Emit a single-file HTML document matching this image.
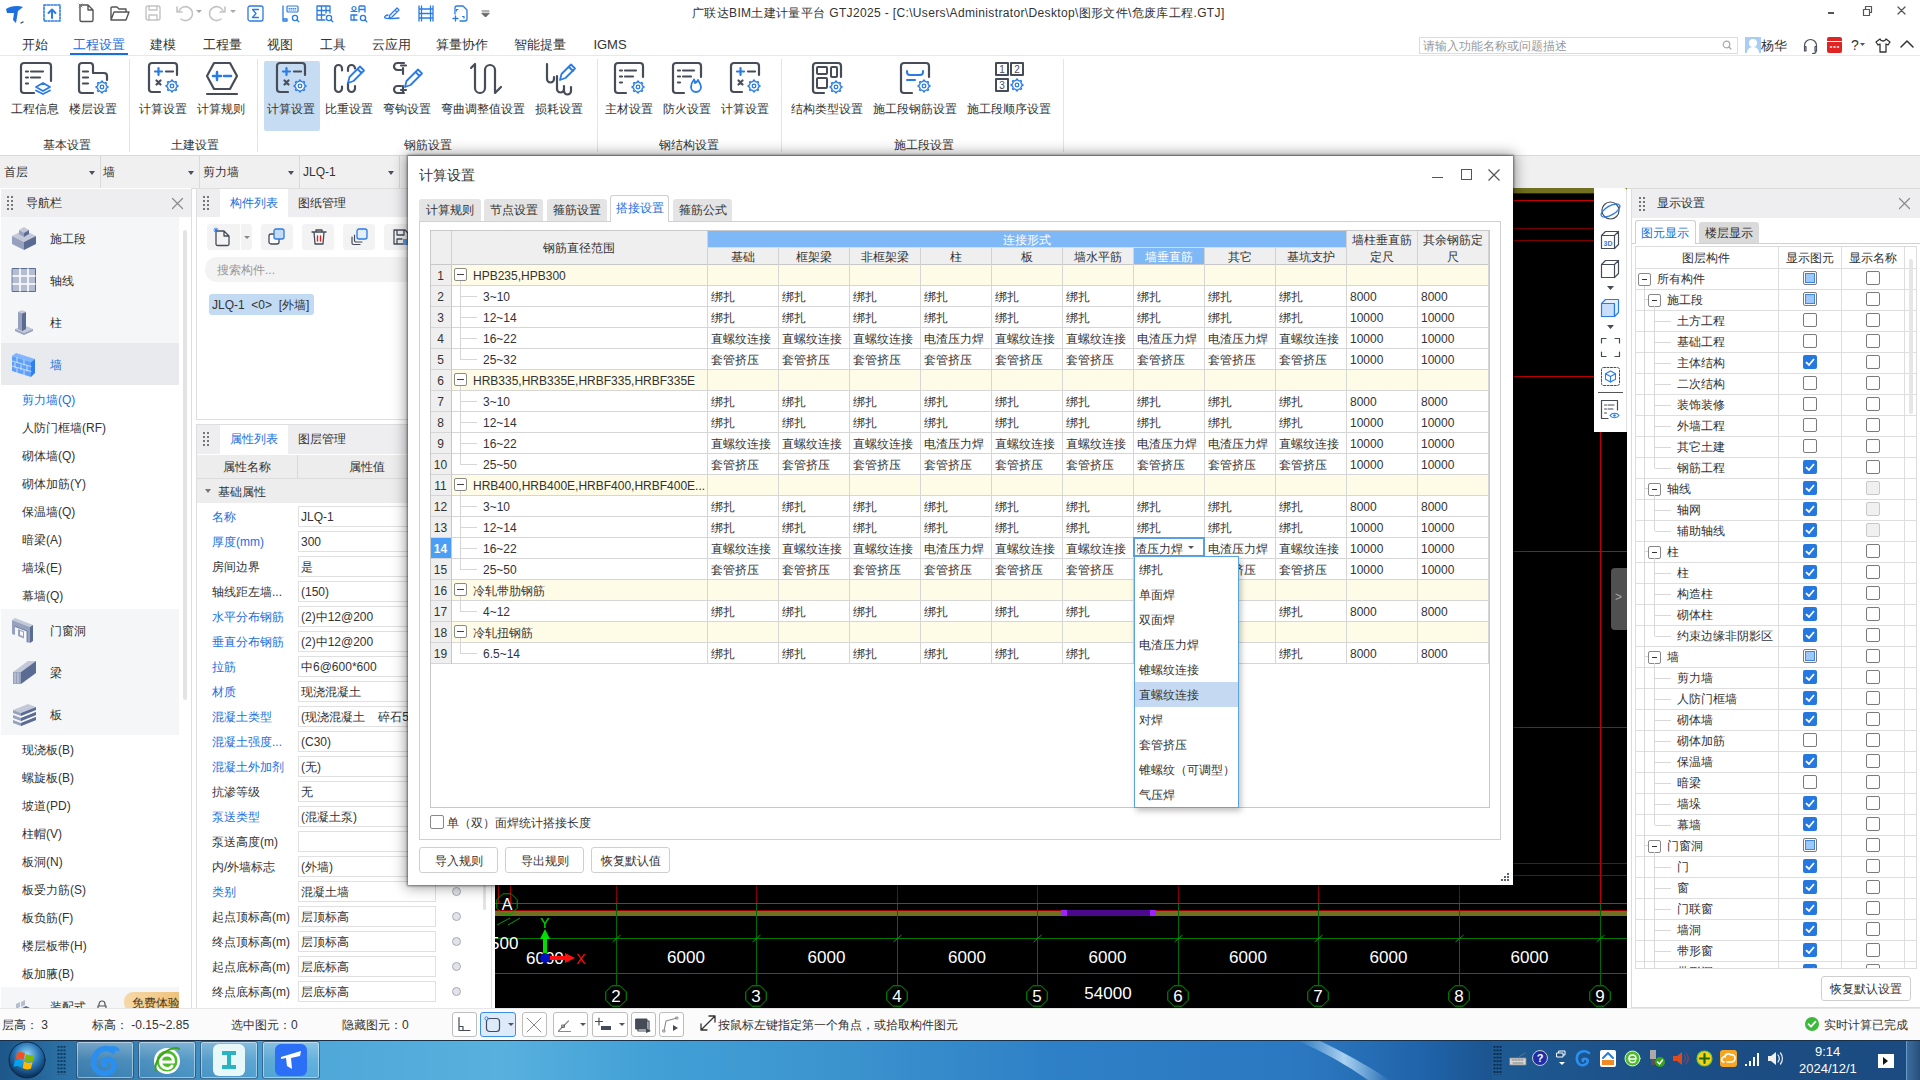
<!DOCTYPE html><html><head><meta charset="utf-8"><style>
*{box-sizing:border-box;margin:0;padding:0}
html,body{width:1920px;height:1080px;overflow:hidden;background:#fff;font-family:"Liberation Sans", sans-serif;color:#333;font-size:12px}
.a{position:absolute}
.t{position:absolute;white-space:nowrap;line-height:1;margin-top:1px}
svg{position:absolute;overflow:visible}
</style></head><body>

<div class="a" style="left:0;top:0;width:1920px;height:156px;background:#fff"></div>
<div class="t" style="left:692px;top:6px;font-size:12px;letter-spacing:0.35px;color:#333">广联达BIM土建计量平台 GTJ2025 - [C:\Users\Administrator\Desktop\图形文件\危废库工程.GTJ]</div>
<div class="t" style="left:-5px;width:80px;text-align:center;top:37px;font-size:13px;color:#333">开始</div>
<div class="t" style="left:59px;width:80px;text-align:center;top:37px;font-size:13px;color:#1a6fe0">工程设置</div>
<div class="t" style="left:123px;width:80px;text-align:center;top:37px;font-size:13px;color:#333">建模</div>
<div class="t" style="left:182px;width:80px;text-align:center;top:37px;font-size:13px;color:#333">工程量</div>
<div class="t" style="left:240px;width:80px;text-align:center;top:37px;font-size:13px;color:#333">视图</div>
<div class="t" style="left:293px;width:80px;text-align:center;top:37px;font-size:13px;color:#333">工具</div>
<div class="t" style="left:351px;width:80px;text-align:center;top:37px;font-size:13px;color:#333">云应用</div>
<div class="t" style="left:422px;width:80px;text-align:center;top:37px;font-size:13px;color:#333">算量协作</div>
<div class="t" style="left:500px;width:80px;text-align:center;top:37px;font-size:13px;color:#333">智能提量</div>
<div class="t" style="left:570px;width:80px;text-align:center;top:37px;font-size:13px;color:#333">IGMS</div>
<div class="a" style="left:70px;top:53px;width:58px;height:2px;background:#1a6fe0"></div>
<div class="a" style="left:0;top:55px;width:1920px;height:1px;background:#e8e8e8"></div>
<div class="a" style="left:264px;top:61px;width:56px;height:70px;background:#c6dcf3;border-radius:2px"></div>
<div class="t" style="left:-25px;width:120px;text-align:center;top:102px;font-size:12px;color:#333">工程信息</div>
<div class="t" style="left:33px;width:120px;text-align:center;top:102px;font-size:12px;color:#333">楼层设置</div>
<div class="t" style="left:103px;width:120px;text-align:center;top:102px;font-size:12px;color:#333">计算设置</div>
<div class="t" style="left:161px;width:120px;text-align:center;top:102px;font-size:12px;color:#333">计算规则</div>
<div class="t" style="left:231px;width:120px;text-align:center;top:102px;font-size:12px;color:#333">计算设置</div>
<div class="t" style="left:289px;width:120px;text-align:center;top:102px;font-size:12px;color:#333">比重设置</div>
<div class="t" style="left:347px;width:120px;text-align:center;top:102px;font-size:12px;color:#333">弯钩设置</div>
<div class="t" style="left:423px;width:120px;text-align:center;top:102px;font-size:12px;color:#333">弯曲调整值设置</div>
<div class="t" style="left:499px;width:120px;text-align:center;top:102px;font-size:12px;color:#333">损耗设置</div>
<div class="t" style="left:569px;width:120px;text-align:center;top:102px;font-size:12px;color:#333">主材设置</div>
<div class="t" style="left:627px;width:120px;text-align:center;top:102px;font-size:12px;color:#333">防火设置</div>
<div class="t" style="left:685px;width:120px;text-align:center;top:102px;font-size:12px;color:#333">计算设置</div>
<div class="t" style="left:767px;width:120px;text-align:center;top:102px;font-size:12px;color:#333">结构类型设置</div>
<div class="t" style="left:855px;width:120px;text-align:center;top:102px;font-size:12px;color:#333">施工段钢筋设置</div>
<div class="t" style="left:949px;width:120px;text-align:center;top:102px;font-size:12px;color:#333">施工段顺序设置</div>
<div class="t" style="left:7px;width:120px;text-align:center;top:138px;font-size:12px;color:#333">基本设置</div>
<div class="t" style="left:135px;width:120px;text-align:center;top:138px;font-size:12px;color:#333">土建设置</div>
<div class="t" style="left:368px;width:120px;text-align:center;top:138px;font-size:12px;color:#333">钢筋设置</div>
<div class="t" style="left:629px;width:120px;text-align:center;top:138px;font-size:12px;color:#333">钢结构设置</div>
<div class="t" style="left:864px;width:120px;text-align:center;top:138px;font-size:12px;color:#333">施工段设置</div>
<div class="a" style="left:129px;top:59px;width:1px;height:93px;background:#e4e4e4"></div>
<div class="a" style="left:257px;top:59px;width:1px;height:93px;background:#e4e4e4"></div>
<div class="a" style="left:597px;top:59px;width:1px;height:93px;background:#e4e4e4"></div>
<div class="a" style="left:781px;top:59px;width:1px;height:93px;background:#e4e4e4"></div>
<div class="a" style="left:1063px;top:59px;width:1px;height:93px;background:#e4e4e4"></div>
<div class="a" style="left:0;top:155px;width:1920px;height:1px;background:#d9d9d9"></div>
<svg width="33" height="33" viewBox="0 0 33 33" style="left:20px;top:62px" fill="none" stroke-linecap="round" stroke-linejoin="round" stroke-width="2.2"><path d="M14 31H4a3 3 0 0 1-3-3V4a3 3 0 0 1 3-3h24a3 3 0 0 1 3 3v15" stroke="#464c58"/><path d="M6 9.5h2M11 9.5h12M6 15.5h2M11 15.5h9M6 21.5h2" stroke="#464c58"/><path d="M16 25l7-4 7 4-7 4z" stroke="#2a7be4" stroke-width="1.8"/><path d="M16 28.5l7 3.5 7-3.5" stroke="#2a7be4" stroke-width="1.8"/></svg>
<svg width="33" height="33" viewBox="0 0 33 33" style="left:78px;top:62px" fill="none" stroke-linecap="round" stroke-linejoin="round" stroke-width="2.2"><path d="M15 31H4a3 3 0 0 1-3-3V4a3 3 0 0 1 3-3h8a3 3 0 0 1 3 3v7h11a3 3 0 0 1 3 3v4" stroke="#464c58"/><path d="M5 9.5h5M5 15.5h5M5 21.5h5" stroke="#464c58"/><polygon points="29.90,25.00 29.87,25.58 28.51,25.90 28.40,26.34 28.25,26.76 28.06,27.17 27.82,27.56 28.56,28.74 28.17,29.17 27.74,29.56 26.56,28.82 26.17,29.06 25.76,29.25 25.34,29.40 24.90,29.51 24.58,30.87 24.00,30.90 23.42,30.87 23.10,29.51 22.66,29.40 22.24,29.25 21.83,29.06 21.44,28.82 20.26,29.56 19.83,29.17 19.44,28.74 20.18,27.56 19.94,27.17 19.75,26.76 19.60,26.34 19.49,25.90 18.13,25.58 18.10,25.00 18.13,24.42 19.49,24.10 19.60,23.66 19.75,23.24 19.94,22.83 20.18,22.44 19.44,21.26 19.83,20.83 20.26,20.44 21.44,21.18 21.83,20.94 22.24,20.75 22.66,20.60 23.10,20.49 23.42,19.13 24.00,19.10 24.58,19.13 24.90,20.49 25.34,20.60 25.76,20.75 26.17,20.94 26.56,21.18 27.74,20.44 28.17,20.83 28.56,21.26 27.82,22.44 28.06,22.83 28.25,23.24 28.40,23.66 28.51,24.10 29.87,24.42" stroke="#2a7be4" stroke-width="1.3" fill="#fff"/><circle cx="24" cy="25" r="1.8" stroke="#2a7be4" stroke-width="1.3"/></svg>
<svg width="33" height="33" viewBox="0 0 33 33" style="left:148px;top:62px" fill="none" stroke-linecap="round" stroke-linejoin="round" stroke-width="2.2"><path d="M12 30H4a3 3 0 0 1-3-3V4a3 3 0 0 1 3-3h22a3 3 0 0 1 3 3v9" stroke="#464c58"/><path d="M7 9.5h7M10.5 6v7" stroke="#2a7be4"/><path d="M18 9.5h7" stroke="#464c58"/><path d="M8.5 18.5l4 4M12.5 18.5l-4 4" stroke="#464c58"/><polygon points="29.90,24.00 29.87,24.58 28.51,24.90 28.40,25.34 28.25,25.76 28.06,26.17 27.82,26.56 28.56,27.74 28.17,28.17 27.74,28.56 26.56,27.82 26.17,28.06 25.76,28.25 25.34,28.40 24.90,28.51 24.58,29.87 24.00,29.90 23.42,29.87 23.10,28.51 22.66,28.40 22.24,28.25 21.83,28.06 21.44,27.82 20.26,28.56 19.83,28.17 19.44,27.74 20.18,26.56 19.94,26.17 19.75,25.76 19.60,25.34 19.49,24.90 18.13,24.58 18.10,24.00 18.13,23.42 19.49,23.10 19.60,22.66 19.75,22.24 19.94,21.83 20.18,21.44 19.44,20.26 19.83,19.83 20.26,19.44 21.44,20.18 21.83,19.94 22.24,19.75 22.66,19.60 23.10,19.49 23.42,18.13 24.00,18.10 24.58,18.13 24.90,19.49 25.34,19.60 25.76,19.75 26.17,19.94 26.56,20.18 27.74,19.44 28.17,19.83 28.56,20.26 27.82,21.44 28.06,21.83 28.25,22.24 28.40,22.66 28.51,23.10 29.87,23.42" stroke="#2a7be4" stroke-width="1.3" fill="#fff"/><circle cx="24" cy="24" r="1.8" stroke="#2a7be4" stroke-width="1.3"/></svg>
<svg width="33" height="33" viewBox="0 0 33 33" style="left:206px;top:62px" fill="none" stroke-linecap="round" stroke-linejoin="round" stroke-width="2.2"><path d="M8 1h16l7 13-7 13H8L1 14z" stroke="#464c58"/><path d="M7 14h8M11 10v8M18 14h7" stroke="#2a7be4" stroke-width="2.5"/><path d="M1 32h30" stroke="#464c58"/></svg>
<svg width="33" height="33" viewBox="0 0 33 33" style="left:276px;top:62px" fill="none" stroke-linecap="round" stroke-linejoin="round" stroke-width="2.2"><path d="M12 30H4a3 3 0 0 1-3-3V4a3 3 0 0 1 3-3h22a3 3 0 0 1 3 3v9" stroke="#464c58"/><path d="M7 9.5h7M10.5 6v7" stroke="#2a7be4"/><path d="M18 9.5h7" stroke="#464c58"/><path d="M8.5 18.5l4 4M12.5 18.5l-4 4" stroke="#464c58"/><polygon points="29.90,24.00 29.87,24.58 28.51,24.90 28.40,25.34 28.25,25.76 28.06,26.17 27.82,26.56 28.56,27.74 28.17,28.17 27.74,28.56 26.56,27.82 26.17,28.06 25.76,28.25 25.34,28.40 24.90,28.51 24.58,29.87 24.00,29.90 23.42,29.87 23.10,28.51 22.66,28.40 22.24,28.25 21.83,28.06 21.44,27.82 20.26,28.56 19.83,28.17 19.44,27.74 20.18,26.56 19.94,26.17 19.75,25.76 19.60,25.34 19.49,24.90 18.13,24.58 18.10,24.00 18.13,23.42 19.49,23.10 19.60,22.66 19.75,22.24 19.94,21.83 20.18,21.44 19.44,20.26 19.83,19.83 20.26,19.44 21.44,20.18 21.83,19.94 22.24,19.75 22.66,19.60 23.10,19.49 23.42,18.13 24.00,18.10 24.58,18.13 24.90,19.49 25.34,19.60 25.76,19.75 26.17,19.94 26.56,20.18 27.74,19.44 28.17,19.83 28.56,20.26 27.82,21.44 28.06,21.83 28.25,22.24 28.40,22.66 28.51,23.10 29.87,23.42" stroke="#2a7be4" stroke-width="1.3" fill="#fff"/><circle cx="24" cy="24" r="1.8" stroke="#2a7be4" stroke-width="1.3"/></svg>
<svg width="33" height="33" viewBox="0 0 33 33" style="left:334px;top:62px" fill="none" stroke-linecap="round" stroke-linejoin="round" stroke-width="2.2"><path d="M8 8.5V6.5a3.5 3.5 0 0 0-7 0v20a3.5 3.5 0 0 0 7 0v-2" stroke="#464c58"/><path d="M14 9V6.5a3.5 3.5 0 0 1 7 0M14 21v5.5a3.5 3.5 0 0 0 7 0V24" stroke="#464c58"/><path d="M14 21l1.5-6L26 4.5l4 4L19.5 19z M23.5 7l4 4" stroke="#2a7be4" stroke-width="1.8" fill="#fff"/></svg>
<svg width="33" height="33" viewBox="0 0 33 33" style="left:392px;top:62px" fill="none" stroke-linecap="round" stroke-linejoin="round" stroke-width="2.2"><path d="M12 1H5.5a3.5 3.5 0 0 0 0 7H9M11 6v6M9 3.5h5" stroke="#464c58"/><path d="M12 31H5.5a3.5 3.5 0 0 1 0-7H9M11 24v7M9 28h5" stroke="#464c58"/><path d="M13 25l1.5-6L26 7.5l4 4L18.5 23z M23.5 10l4 4" stroke="#2a7be4" stroke-width="1.8"/></svg>
<svg width="33" height="33" viewBox="0 0 33 33" style="left:468px;top:62px" fill="none" stroke-linecap="round" stroke-linejoin="round" stroke-width="2.2"><path d="M3 6l4-4v24a5 5 0 0 0 10 0V8a5 5 0 0 1 10 0v23l6-6" stroke="#464c58"/></svg>
<svg width="33" height="33" viewBox="0 0 33 33" style="left:544px;top:62px" fill="none" stroke-linecap="round" stroke-linejoin="round" stroke-width="2.2"><path d="M3 2v15a3.5 3.5 0 0 0 7 0v-2M13 14v13a3.5 3.5 0 0 0 7 0v-3M20 24v5a3.5 3.5 0 0 0 7 0v-4" stroke="#464c58"/><path d="M16 18l1.5-6L27 2.5l4 4L21.5 16z M25 5l4 4" stroke="#2a7be4" stroke-width="1.8"/></svg>
<svg width="33" height="33" viewBox="0 0 33 33" style="left:614px;top:62px" fill="none" stroke-linecap="round" stroke-linejoin="round" stroke-width="2.2"><path d="M12 31H4a3 3 0 0 1-3-3V4a3 3 0 0 1 3-3h22a3 3 0 0 1 3 3v11" stroke="#464c58"/><path d="M6 8.5h2M11 8.5h11M6 14.5h2M11 14.5h8M6 20.5h2" stroke="#464c58"/><polygon points="29.90,25.00 29.87,25.58 28.51,25.90 28.40,26.34 28.25,26.76 28.06,27.17 27.82,27.56 28.56,28.74 28.17,29.17 27.74,29.56 26.56,28.82 26.17,29.06 25.76,29.25 25.34,29.40 24.90,29.51 24.58,30.87 24.00,30.90 23.42,30.87 23.10,29.51 22.66,29.40 22.24,29.25 21.83,29.06 21.44,28.82 20.26,29.56 19.83,29.17 19.44,28.74 20.18,27.56 19.94,27.17 19.75,26.76 19.60,26.34 19.49,25.90 18.13,25.58 18.10,25.00 18.13,24.42 19.49,24.10 19.60,23.66 19.75,23.24 19.94,22.83 20.18,22.44 19.44,21.26 19.83,20.83 20.26,20.44 21.44,21.18 21.83,20.94 22.24,20.75 22.66,20.60 23.10,20.49 23.42,19.13 24.00,19.10 24.58,19.13 24.90,20.49 25.34,20.60 25.76,20.75 26.17,20.94 26.56,21.18 27.74,20.44 28.17,20.83 28.56,21.26 27.82,22.44 28.06,22.83 28.25,23.24 28.40,23.66 28.51,24.10 29.87,24.42" stroke="#2a7be4" stroke-width="1.3" fill="#fff"/><circle cx="24" cy="25" r="1.8" stroke="#2a7be4" stroke-width="1.3"/></svg>
<svg width="33" height="33" viewBox="0 0 33 33" style="left:672px;top:62px" fill="none" stroke-linecap="round" stroke-linejoin="round" stroke-width="2.2"><path d="M12 31H4a3 3 0 0 1-3-3V4a3 3 0 0 1 3-3h22a3 3 0 0 1 3 3v11" stroke="#464c58"/><path d="M6 8.5h2M11 8.5h11M6 14.5h2M11 14.5h8M6 20.5h2" stroke="#464c58"/><path d="M19 25a5 5 0 0 0 10 0c0-3-2-5-3-7-1 2-1.5 3-3 3 0-1.5 0-2.5-1-3.5-1.5 2-3 4-3 7.5z" stroke="#2a7be4" stroke-width="1.8" fill="#fff"/></svg>
<svg width="33" height="33" viewBox="0 0 33 33" style="left:730px;top:62px" fill="none" stroke-linecap="round" stroke-linejoin="round" stroke-width="2.2"><path d="M12 30H4a3 3 0 0 1-3-3V4a3 3 0 0 1 3-3h22a3 3 0 0 1 3 3v9" stroke="#464c58"/><path d="M7 9.5h7M10.5 6v7" stroke="#2a7be4"/><path d="M18 9.5h7" stroke="#464c58"/><path d="M8.5 18.5l4 4M12.5 18.5l-4 4" stroke="#464c58"/><polygon points="29.90,24.00 29.87,24.58 28.51,24.90 28.40,25.34 28.25,25.76 28.06,26.17 27.82,26.56 28.56,27.74 28.17,28.17 27.74,28.56 26.56,27.82 26.17,28.06 25.76,28.25 25.34,28.40 24.90,28.51 24.58,29.87 24.00,29.90 23.42,29.87 23.10,28.51 22.66,28.40 22.24,28.25 21.83,28.06 21.44,27.82 20.26,28.56 19.83,28.17 19.44,27.74 20.18,26.56 19.94,26.17 19.75,25.76 19.60,25.34 19.49,24.90 18.13,24.58 18.10,24.00 18.13,23.42 19.49,23.10 19.60,22.66 19.75,22.24 19.94,21.83 20.18,21.44 19.44,20.26 19.83,19.83 20.26,19.44 21.44,20.18 21.83,19.94 22.24,19.75 22.66,19.60 23.10,19.49 23.42,18.13 24.00,18.10 24.58,18.13 24.90,19.49 25.34,19.60 25.76,19.75 26.17,19.94 26.56,20.18 27.74,19.44 28.17,19.83 28.56,20.26 27.82,21.44 28.06,21.83 28.25,22.24 28.40,22.66 28.51,23.10 29.87,23.42" stroke="#2a7be4" stroke-width="1.3" fill="#fff"/><circle cx="24" cy="24" r="1.8" stroke="#2a7be4" stroke-width="1.3"/></svg>
<svg width="33" height="33" viewBox="0 0 33 33" style="left:812px;top:62px" fill="none" stroke-linecap="round" stroke-linejoin="round" stroke-width="2.2"><path d="M12 31H4a3 3 0 0 1-3-3V4a3 3 0 0 1 3-3h22a3 3 0 0 1 3 3v11" stroke="#464c58"/><rect x="5" y="5" width="10" height="7" rx="1" stroke="#464c58" stroke-width="2"/><rect x="19" y="5" width="6" height="10" rx="1" stroke="#464c58" stroke-width="2"/><rect x="5" y="16" width="10" height="10" rx="1" stroke="#464c58" stroke-width="2"/><polygon points="29.90,25.00 29.87,25.58 28.51,25.90 28.40,26.34 28.25,26.76 28.06,27.17 27.82,27.56 28.56,28.74 28.17,29.17 27.74,29.56 26.56,28.82 26.17,29.06 25.76,29.25 25.34,29.40 24.90,29.51 24.58,30.87 24.00,30.90 23.42,30.87 23.10,29.51 22.66,29.40 22.24,29.25 21.83,29.06 21.44,28.82 20.26,29.56 19.83,29.17 19.44,28.74 20.18,27.56 19.94,27.17 19.75,26.76 19.60,26.34 19.49,25.90 18.13,25.58 18.10,25.00 18.13,24.42 19.49,24.10 19.60,23.66 19.75,23.24 19.94,22.83 20.18,22.44 19.44,21.26 19.83,20.83 20.26,20.44 21.44,21.18 21.83,20.94 22.24,20.75 22.66,20.60 23.10,20.49 23.42,19.13 24.00,19.10 24.58,19.13 24.90,20.49 25.34,20.60 25.76,20.75 26.17,20.94 26.56,21.18 27.74,20.44 28.17,20.83 28.56,21.26 27.82,22.44 28.06,22.83 28.25,23.24 28.40,23.66 28.51,24.10 29.87,24.42" stroke="#2a7be4" stroke-width="1.3" fill="#fff"/><circle cx="24" cy="25" r="1.8" stroke="#2a7be4" stroke-width="1.3"/></svg>
<svg width="33" height="33" viewBox="0 0 33 33" style="left:900px;top:62px" fill="none" stroke-linecap="round" stroke-linejoin="round" stroke-width="2.2"><path d="M12 31H4a3 3 0 0 1-3-3V4a3 3 0 0 1 3-3h22a3 3 0 0 1 3 3v11" stroke="#464c58"/><path d="M7 9v1a3 3 0 0 0 3 3h10a3 3 0 0 0 3-3V9M7 18h8" stroke="#2a7be4" stroke-width="2"/><polygon points="29.90,24.00 29.87,24.58 28.51,24.90 28.40,25.34 28.25,25.76 28.06,26.17 27.82,26.56 28.56,27.74 28.17,28.17 27.74,28.56 26.56,27.82 26.17,28.06 25.76,28.25 25.34,28.40 24.90,28.51 24.58,29.87 24.00,29.90 23.42,29.87 23.10,28.51 22.66,28.40 22.24,28.25 21.83,28.06 21.44,27.82 20.26,28.56 19.83,28.17 19.44,27.74 20.18,26.56 19.94,26.17 19.75,25.76 19.60,25.34 19.49,24.90 18.13,24.58 18.10,24.00 18.13,23.42 19.49,23.10 19.60,22.66 19.75,22.24 19.94,21.83 20.18,21.44 19.44,20.26 19.83,19.83 20.26,19.44 21.44,20.18 21.83,19.94 22.24,19.75 22.66,19.60 23.10,19.49 23.42,18.13 24.00,18.10 24.58,18.13 24.90,19.49 25.34,19.60 25.76,19.75 26.17,19.94 26.56,20.18 27.74,19.44 28.17,19.83 28.56,20.26 27.82,21.44 28.06,21.83 28.25,22.24 28.40,22.66 28.51,23.10 29.87,23.42" stroke="#2a7be4" stroke-width="1.3" fill="#fff"/><circle cx="24" cy="24" r="1.8" stroke="#2a7be4" stroke-width="1.3"/></svg>
<svg width="33" height="33" viewBox="0 0 33 33" style="left:994px;top:62px" fill="none" stroke-linecap="round" stroke-linejoin="round" stroke-width="2.2"><rect x="2" y="1" width="12" height="12" stroke="#464c58" stroke-width="2"/><rect x="17" y="1" width="12" height="12" stroke="#464c58" stroke-width="2"/><rect x="2" y="17" width="12" height="12" stroke="#464c58" stroke-width="2"/><text x="8" y="11" font-size="10" fill="#464c58" stroke="none" text-anchor="middle" font-family="Liberation Sans">1</text><text x="23" y="11" font-size="10" fill="#464c58" stroke="none" text-anchor="middle" font-family="Liberation Sans">2</text><text x="8" y="27" font-size="10" fill="#464c58" stroke="none" text-anchor="middle" font-family="Liberation Sans">3</text><polygon points="28.90,23.00 28.87,23.58 27.51,23.90 27.40,24.34 27.25,24.76 27.06,25.17 26.82,25.56 27.56,26.74 27.17,27.17 26.74,27.56 25.56,26.82 25.17,27.06 24.76,27.25 24.34,27.40 23.90,27.51 23.58,28.87 23.00,28.90 22.42,28.87 22.10,27.51 21.66,27.40 21.24,27.25 20.83,27.06 20.44,26.82 19.26,27.56 18.83,27.17 18.44,26.74 19.18,25.56 18.94,25.17 18.75,24.76 18.60,24.34 18.49,23.90 17.13,23.58 17.10,23.00 17.13,22.42 18.49,22.10 18.60,21.66 18.75,21.24 18.94,20.83 19.18,20.44 18.44,19.26 18.83,18.83 19.26,18.44 20.44,19.18 20.83,18.94 21.24,18.75 21.66,18.60 22.10,18.49 22.42,17.13 23.00,17.10 23.58,17.13 23.90,18.49 24.34,18.60 24.76,18.75 25.17,18.94 25.56,19.18 26.74,18.44 27.17,18.83 27.56,19.26 26.82,20.44 27.06,20.83 27.25,21.24 27.40,21.66 27.51,22.10 28.87,22.42" stroke="#2a7be4" stroke-width="1.3" fill="#fff"/><circle cx="23" cy="23" r="1.8" stroke="#2a7be4" stroke-width="1.3"/></svg>
<svg width="22" height="22" viewBox="0 0 22 22" style="left:4px;top:3px" fill="none" stroke-linecap="round" stroke-linejoin="round" stroke-width="2.2"><path d="M2 6c4-3 12-4 17-2l-5 4-2 12-3-3 1-7H3z" fill="#1f6fe0" stroke="none"/><path d="M17 20l2-1" stroke="#333" stroke-width="1.2"/></svg><svg width="20" height="20" viewBox="0 0 20 20" style="left:42px;top:3px" fill="none" stroke-linecap="round" stroke-linejoin="round" stroke-width="2.2"><rect x="2" y="2" width="16" height="16" stroke="#2a7be4" stroke-width="1.6" stroke-dasharray="2 1.5"/><path d="M10 15V7M6.5 10l3.5-3.5 3.5 3.5" stroke="#2a7be4" stroke-width="2"/></svg><svg width="20" height="20" viewBox="0 0 20 20" style="left:76px;top:3px" fill="none" stroke-linecap="round" stroke-linejoin="round" stroke-width="2.2"><path d="M4 2h8l5 5v10a1.5 1.5 0 0 1-1.5 1.5h-10A1.5 1.5 0 0 1 4 17z M12 2v5h5" stroke="#555" stroke-width="1.4"/><path d="M3 1l3 3M6 1l-3 3" stroke="#2a7be4" stroke-width="1"/></svg><svg width="22" height="20" viewBox="0 0 22 20" style="left:109px;top:3px" fill="none" stroke-linecap="round" stroke-linejoin="round" stroke-width="2.2"><path d="M2 17V5a1 1 0 0 1 1-1h5l2 2h7v3M2 17l3-8h15l-3 8z" stroke="#555" stroke-width="1.4"/></svg><svg width="20" height="20" viewBox="0 0 20 20" style="left:143px;top:3px" fill="none" stroke-linecap="round" stroke-linejoin="round" stroke-width="2.2"><rect x="3" y="3" width="14" height="14" rx="2" stroke="#c4c4c4" stroke-width="1.4"/><path d="M6 3v4h8V3M6 17v-5h8v5" stroke="#c4c4c4" stroke-width="1.4"/></svg><svg width="20" height="20" viewBox="0 0 20 20" style="left:174px;top:3px" fill="none" stroke-linecap="round" stroke-linejoin="round" stroke-width="2.2"><path d="M5 8a7 7 0 1 1 2 8" stroke="#c4c4c4" stroke-width="1.6"/><path d="M3 4v5h5" stroke="#c4c4c4" stroke-width="1.6"/></svg><svg width="6" height="4" viewBox="0 0 6 4" style="left:196px;top:10px" fill="none" stroke-linecap="round" stroke-linejoin="round" stroke-width="2.2"><path d="M0 0h6L3 3z" fill="#aaa" stroke="none"/></svg><svg width="20" height="20" viewBox="0 0 20 20" style="left:208px;top:3px" fill="none" stroke-linecap="round" stroke-linejoin="round" stroke-width="2.2"><path d="M15 8a7 7 0 1 0-2 8" stroke="#c4c4c4" stroke-width="1.6"/><path d="M17 4v5h-5" stroke="#c4c4c4" stroke-width="1.6"/></svg><svg width="6" height="4" viewBox="0 0 6 4" style="left:230px;top:10px" fill="none" stroke-linecap="round" stroke-linejoin="round" stroke-width="2.2"><path d="M0 0h6L3 3z" fill="#aaa" stroke="none"/></svg><svg width="17" height="17" viewBox="0 0 17 17" style="left:247px;top:5px" fill="none" stroke-linecap="round" stroke-linejoin="round" stroke-width="2.2"><rect x="1" y="1" width="15" height="15" rx="2" stroke="#2a7be4" stroke-width="1.3"/><path d="M11.5 4.5H5.5l3.5 4-3.5 4h6" stroke="#2a7be4" stroke-width="1.3"/></svg><svg width="18" height="18" viewBox="0 0 18 18" style="left:281px;top:4px" fill="none" stroke-linecap="round" stroke-linejoin="round" stroke-width="2.2"><path d="M2 2v15h4v-2H2" stroke="#2a7be4" stroke-width="1.3"/><rect x="6" y="2" width="11" height="6" rx="1" stroke="#2a7be4" stroke-width="1.2"/><path d="M8 4.5h.8M10 4.5h.8M12 4.5h.8M14 4.5h.8M8 6h.8M10 6h.8M12 6h.8M14 6h.8" stroke="#2a7be4" stroke-width=".9"/><circle cx="14" cy="14" r="2.6" stroke="#2a7be4" stroke-width="1.3"/><path d="M16 16l1.8 1.8" stroke="#2a7be4" stroke-width="1.3"/></svg><svg width="18" height="18" viewBox="0 0 18 18" style="left:315px;top:4px" fill="none" stroke-linecap="round" stroke-linejoin="round" stroke-width="2.2"><path d="M2 2h13v7M2 2v14h8M2 6.5h13M2 11h8M6.5 2v14M11 2v7" stroke="#2a7be4" stroke-width="1.3"/><circle cx="14" cy="14" r="2.6" stroke="#2a7be4" stroke-width="1.3"/><path d="M16 16l1.8 1.8" stroke="#2a7be4" stroke-width="1.3"/></svg><svg width="18" height="18" viewBox="0 0 18 18" style="left:349px;top:4px" fill="none" stroke-linecap="round" stroke-linejoin="round" stroke-width="2.2"><circle cx="5" cy="4.5" r="2" stroke="#2a7be4" stroke-width="1.2"/><path d="M2 7.5h6" stroke="#2a7be4" stroke-width="1.2"/><path d="M10 8V3a1 1 0 0 1 1-1h4a1 1 0 0 1 1 1v5M10 5.5h6" stroke="#2a7be4" stroke-width="1.3"/><path d="M8 11H2v5h6" stroke="#2a7be4" stroke-width="1.3"/><path d="M5 11v5" stroke="#2a7be4" stroke-width="1.3"/><circle cx="14" cy="14" r="2.6" stroke="#2a7be4" stroke-width="1.3"/><path d="M16 16l1.8 1.8" stroke="#2a7be4" stroke-width="1.3"/></svg><svg width="18" height="16" viewBox="0 0 18 16" style="left:383px;top:5px" fill="none" stroke-linecap="round" stroke-linejoin="round" stroke-width="2.2"><path d="M6 13l1-3 7-7 2 2-7 7z M12 5l2 2" stroke="#2a7be4" stroke-width="1.3"/><path d="M5 10c-3 .5-4 2-3 3s9 .5 14 0" stroke="#2a7be4" stroke-width="1.3"/></svg><svg width="18" height="17" viewBox="0 0 18 17" style="left:417px;top:5px" fill="none" stroke-linecap="round" stroke-linejoin="round" stroke-width="2.2"><path d="M2 1v15M16 1v15M2 4h14M2 8.5h14M2 13h14M4.5 1v15M13.5 1v15" stroke="#2a7be4" stroke-width="1.3"/></svg><svg width="18" height="17" viewBox="0 0 18 17" style="left:451px;top:5px" fill="none" stroke-linecap="round" stroke-linejoin="round" stroke-width="2.2"><path d="M4 9V3a2 2 0 0 1 2-2h6l4 4v9a2 2 0 0 1-2 2H9" stroke="#2a7be4" stroke-width="1.3"/><path d="M7 4.5H5.5v1.5M13 13v-1.5h-1.5" stroke="#2a7be4" stroke-width="1.2"/><path d="M4.5 11v5M2 13.5h5" stroke="#2a7be4" stroke-width="1.3"/></svg><svg width="9" height="8" viewBox="0 0 9 8" style="left:481px;top:10px" fill="none" stroke-linecap="round" stroke-linejoin="round" stroke-width="2.2"><path d="M1 1h7M1 3.5l3.5 3.5 3.5-3.5z" stroke="#666" fill="#666" stroke-width="1"/></svg>
<div class="a" style="left:1828px;top:12px;width:6px;height:2px;background:#555"></div>
<svg width="11" height="11" viewBox="0 0 11 11" style="left:1862px;top:5px" fill="none" stroke-linecap="round" stroke-linejoin="round" stroke-width="2.2"><path d="M1.5 4.5h6v6h-6z M3.5 4.5V1.5h6v6h-2" stroke="#555" stroke-width="1.2"/></svg>
<svg width="9" height="9" viewBox="0 0 9 9" style="left:1897px;top:6px" fill="none" stroke-linecap="round" stroke-linejoin="round" stroke-width="2.2"><path d="M1 1l7 7M8 1L1 8" stroke="#555" stroke-width="1.3"/></svg>
<div class="a" style="left:1745px;top:37px;width:16px;height:16px;background:#a9cdf3"></div>
<svg width="16" height="16" viewBox="0 0 16 16" style="left:1745px;top:37px" fill="none" stroke-linecap="round" stroke-linejoin="round" stroke-width="2.2"><circle cx="8" cy="6" r="4" fill="#fff" stroke="none"/><path d="M2 16c0-4 3-6 6-6s6 2 6 6z" fill="#fff" stroke="none"/></svg>
<svg width="17" height="17" viewBox="0 0 17 17" style="left:1802px;top:37px" fill="none" stroke-linecap="round" stroke-linejoin="round" stroke-width="2.2"><path d="M2.5 10V8.5a6 6 0 0 1 12 0V10M2.5 9.5h1.5v4.5H2.5zM13 9.5h1.5v4.5H13zM14 14.5c0 1.2-1.5 2-3.5 2" stroke="#4a5060" stroke-width="1.2"/></svg>
<div class="a" style="left:1827px;top:37px;width:15px;height:16px;background:#e02424;border-radius:2px"></div>
<div class="a" style="left:1827px;top:41px;width:15px;height:1px;background:#fff"></div>
<svg width="11" height="4" viewBox="0 0 11 4" style="left:1829px;top:45px" fill="none" stroke-linecap="round" stroke-linejoin="round" stroke-width="2.2"><path d="M1.5 2h1M5 2h1M8.5 2h1" stroke="#fff" stroke-width="1.6"/></svg>
<div class="t" style="left:1851px;top:37px;font-size:14px;color:#333">?</div>
<svg width="5" height="4" viewBox="0 0 5 4" style="left:1860px;top:43px" fill="none" stroke-linecap="round" stroke-linejoin="round" stroke-width="2.2"><path d="M0 0h5L2.5 3z" fill="#555" stroke="none"/></svg>
<svg width="18" height="16" viewBox="0 0 18 16" style="left:1874px;top:37px" fill="none" stroke-linecap="round" stroke-linejoin="round" stroke-width="2.2"><path d="M6 2L2 5l2 3 2-1v8h6V7l2 1 2-3-4-3c-.5 1.5-1.5 2-3 2s-2.5-.5-3-2z" stroke="#333" stroke-width="1.3"/></svg>
<svg width="16" height="12" viewBox="0 0 16 12" style="left:1899px;top:38px" fill="none" stroke-linecap="round" stroke-linejoin="round" stroke-width="2.2"><path d="M2 9l6-6 6 6" stroke="#333" stroke-width="1.5"/></svg>
<div class="a" style="left:1419px;top:37px;width:319px;height:17px;border:1px solid #dcdcdc;background:#fff"></div>
<div class="t" style="left:1423px;top:39px;font-size:12px;color:#999">请输入功能名称或问题描述</div>
<div class="t" style="left:1761px;top:38px;font-size:13px;color:#333">杨华</div>
<svg width="10" height="10" viewBox="0 0 10 10" style="left:1722px;top:40px" fill="none" stroke-linecap="round" stroke-linejoin="round" stroke-width="2.2"><circle cx="4.5" cy="4.5" r="3.3" stroke="#aaa" stroke-width="1.2"/><path d="M7 7l2 2" stroke="#aaa" stroke-width="1.2"/></svg>
<div class="a" style="left:0;top:156px;width:1920px;height:33px;background:#f0f0f0;border-bottom:1px solid #dadada"></div>
<div class="a" style="left:0px;top:156px;width:101px;height:32px;border-right:1px solid #dadada"></div>
<div class="t" style="left:4px;top:165px;font-size:12px;color:#333">首层</div>
<div class="a" style="left:89px;top:171px;width:0;height:0;border-left:3px solid transparent;border-right:3px solid transparent;border-top:4px solid #4a5060"></div>
<div class="a" style="left:99px;top:156px;width:101px;height:32px;border-right:1px solid #dadada"></div>
<div class="t" style="left:103px;top:165px;font-size:12px;color:#333">墙</div>
<div class="a" style="left:188px;top:171px;width:0;height:0;border-left:3px solid transparent;border-right:3px solid transparent;border-top:4px solid #4a5060"></div>
<div class="a" style="left:199px;top:156px;width:101px;height:32px;border-right:1px solid #dadada"></div>
<div class="t" style="left:203px;top:165px;font-size:12px;color:#333">剪力墙</div>
<div class="a" style="left:288px;top:171px;width:0;height:0;border-left:3px solid transparent;border-right:3px solid transparent;border-top:4px solid #4a5060"></div>
<div class="a" style="left:299px;top:156px;width:101px;height:32px;border-right:1px solid #dadada"></div>
<div class="t" style="left:303px;top:165px;font-size:12px;color:#333">JLQ-1</div>
<div class="a" style="left:388px;top:171px;width:0;height:0;border-left:3px solid transparent;border-right:3px solid transparent;border-top:4px solid #4a5060"></div>
<div class="a" style="left:0;top:188px;width:192px;height:822px;background:#fff;border-right:1px solid #dedede"></div>
<div class="a" style="left:1px;top:189px;width:190px;height:28px;background:#eeeef0"></div>
<div class="t" style="left:26px;top:196px;font-size:12px;color:#333">导航栏</div>
<svg width="11" height="11" viewBox="0 0 11 11" style="left:172px;top:198px" fill="none" stroke-linecap="round" stroke-linejoin="round" stroke-width="2.2"><path d="M.5 .5l10 10M10.5 .5l-10 10" stroke="#8a8a8a" stroke-width="1.2"/></svg>
<div class="a" style="left:7px;top:196px;width:2px;height:2px;background:#777"></div><div class="a" style="left:11px;top:196px;width:2px;height:2px;background:#777"></div><div class="a" style="left:7px;top:200px;width:2px;height:2px;background:#777"></div><div class="a" style="left:11px;top:200px;width:2px;height:2px;background:#777"></div><div class="a" style="left:7px;top:204px;width:2px;height:2px;background:#777"></div><div class="a" style="left:11px;top:204px;width:2px;height:2px;background:#777"></div><div class="a" style="left:7px;top:208px;width:2px;height:2px;background:#777"></div><div class="a" style="left:11px;top:208px;width:2px;height:2px;background:#777"></div>
<div class="a" style="left:1px;top:217px;width:178px;height:168px;background:#f5f6f8"></div>
<div class="a" style="left:1px;top:343px;width:178px;height:42px;background:#e9eaee"></div>
<div class="t" style="left:50px;top:232px;font-size:12px;color:#333">施工段</div>
<div class="t" style="left:50px;top:274px;font-size:12px;color:#333">轴线</div>
<div class="t" style="left:50px;top:316px;font-size:12px;color:#333">柱</div>
<div class="t" style="left:50px;top:358px;font-size:12px;color:#1a6fe0">墙</div>
<svg width="26" height="26" viewBox="0 0 26 26" style="left:11px;top:225px" fill="none" stroke-linecap="round" stroke-linejoin="round" stroke-width="2.2"><path d="M1 11l12-6 12 6-12 6z" fill="#c3c9d9" stroke="none"/><path d="M1 11v8l12 6v-8z" fill="#96a1bd" stroke="none"/><path d="M25 11v8l-12 6v-8z" fill="#5b6c93" stroke="none"/><path d="M8 5l5-3 5 3-5 3z" fill="#c3c9d9" stroke="none"/><path d="M8 5v4l5 3V8z" fill="#96a1bd" stroke="none"/><path d="M18 5v4l-5 3V8z" fill="#5b6c93" stroke="none"/></svg><svg width="24" height="24" viewBox="0 0 24 24" style="left:12px;top:268px" fill="none" stroke-linecap="round" stroke-linejoin="round" stroke-width="2.2"><rect x="0.5" y="0.5" width="23" height="23" fill="#b5bdd3" stroke="#5b6c93" stroke-width="1"/><path d="M8 1v22M16 1v22M1 8h22M1 16h22" stroke="#fff" stroke-width="1.6"/></svg><svg width="20" height="25" viewBox="0 0 20 25" style="left:14px;top:310px" fill="none" stroke-linecap="round" stroke-linejoin="round" stroke-width="2.2"><path d="M1 19l9-4 9 4-9 4z" fill="#c3c9d9" stroke="none"/><path d="M1 19v2l9 4v-2zM19 19v2l-9 4v-2z" fill="#96a1bd" stroke="none"/><path d="M4 2l4-1.5 4 1.5v17l-4 2-4-2z" fill="#96a1bd" stroke="none"/><path d="M8 3.5l4-1.5v17l-4 2z" fill="#5b6c93" stroke="none"/><path d="M4 2l4-1.5 4 1.5-4 1.5z" fill="#c3c9d9" stroke="none"/></svg><svg width="24" height="25" viewBox="0 0 24 25" style="left:12px;top:352px" fill="none" stroke-linecap="round" stroke-linejoin="round" stroke-width="2.2"><path d="M0 4l4-3 19 6-4 3z" fill="#7fb6ff" stroke="none"/><path d="M0 4l19 6v15L0 19z" fill="#5fa0f6" stroke="none"/><path d="M19 10l4-3v14l-4 4z" fill="#2f7ff0" stroke="none"/><path d="M0 9l19 5.5M0 14l19 5.5M5 5.5v5M12 8v5M3 11v5M9 13v5M15 14v5M5 16v5M12 18v5" stroke="#cfe3ff" stroke-width=".9"/></svg>
<div class="t" style="left:22px;top:393px;font-size:12px;color:#1a6fe0">剪力墙(Q)</div>
<div class="t" style="left:22px;top:421px;font-size:12px;color:#333">人防门框墙(RF)</div>
<div class="t" style="left:22px;top:449px;font-size:12px;color:#333">砌体墙(Q)</div>
<div class="t" style="left:22px;top:477px;font-size:12px;color:#333">砌体加筋(Y)</div>
<div class="t" style="left:22px;top:505px;font-size:12px;color:#333">保温墙(Q)</div>
<div class="t" style="left:22px;top:533px;font-size:12px;color:#333">暗梁(A)</div>
<div class="t" style="left:22px;top:561px;font-size:12px;color:#333">墙垛(E)</div>
<div class="t" style="left:22px;top:589px;font-size:12px;color:#333">幕墙(Q)</div>
<div class="a" style="left:1px;top:609px;width:178px;height:126px;background:#f5f6f8"></div>
<div class="t" style="left:50px;top:624px;font-size:12px;color:#333">门窗洞</div>
<div class="t" style="left:50px;top:666px;font-size:12px;color:#333">梁</div>
<div class="t" style="left:50px;top:708px;font-size:12px;color:#333">板</div>
<svg width="25" height="27" viewBox="0 0 25 27" style="left:11px;top:617px" fill="none" stroke-linecap="round" stroke-linejoin="round" stroke-width="2.2"><path d="M1 3l3-2 18 7-3 2z" fill="#c3c9d9" stroke="none"/><path d="M1 3l18 7v16l-3-1V14L4 9.5V18l-3-1z" fill="#96a1bd" stroke="none"/><path d="M19 10l3-2v16l-3 2z" fill="#5b6c93" stroke="none"/><path d="M7 12l6 2.5v7L7 19z" fill="#96a1bd" stroke="none"/><path d="M9 14l3 1.2v4L9 18z" fill="#f5f6f8" stroke="none"/><path d="M4 9.5l12 4.5v11" stroke="#5b6c93" stroke-width=".8"/></svg><svg width="25" height="25" viewBox="0 0 25 25" style="left:12px;top:660px" fill="none" stroke-linecap="round" stroke-linejoin="round" stroke-width="2.2"><path d="M1 12L16 1h8L9 12z" fill="#c3c9d9" stroke="none"/><path d="M1 12h8v12H1z" fill="#96a1bd" stroke="none"/><path d="M9 12L24 1v12L9 24z" fill="#5b6c93" stroke="none"/><path d="M3 13v10M6 13v10" stroke="#dfe3ee" stroke-width=".8"/></svg><svg width="25" height="23" viewBox="0 0 25 23" style="left:12px;top:703px" fill="none" stroke-linecap="round" stroke-linejoin="round" stroke-width="2.2"><path d="M1 7l15-6 8 3-15 6z" fill="#c3c9d9" stroke="none"/><path d="M1 7l8 3v3L1 10z" fill="#96a1bd" stroke="none"/><path d="M9 10l15-6v3L9 13z" fill="#5b6c93" stroke="none"/><path d="M1 12l8 3 15-6v3L9 18 1 15z" fill="#96a1bd" stroke="none"/><path d="M9 15l15-6v3L9 18z" fill="#5b6c93" stroke="none"/><path d="M1 17l8 3 15-6v3L9 23 1 20z" fill="#96a1bd" stroke="none"/><path d="M9 20l15-6v3L9 23z" fill="#5b6c93" stroke="none"/></svg>
<div class="t" style="left:22px;top:743px;font-size:12px;color:#333">现浇板(B)</div>
<div class="t" style="left:22px;top:771px;font-size:12px;color:#333">螺旋板(B)</div>
<div class="t" style="left:22px;top:799px;font-size:12px;color:#333">坡道(PD)</div>
<div class="t" style="left:22px;top:827px;font-size:12px;color:#333">柱帽(V)</div>
<div class="t" style="left:22px;top:855px;font-size:12px;color:#333">板洞(N)</div>
<div class="t" style="left:22px;top:883px;font-size:12px;color:#333">板受力筋(S)</div>
<div class="t" style="left:22px;top:911px;font-size:12px;color:#333">板负筋(F)</div>
<div class="t" style="left:22px;top:939px;font-size:12px;color:#333">楼层板带(H)</div>
<div class="t" style="left:22px;top:967px;font-size:12px;color:#333">板加腋(B)</div>
<div class="a" style="left:1px;top:987px;width:178px;height:21px;background:#f5f6f8;overflow:hidden"><div class="a" style="left:123px;top:5px;width:56px;height:20px;background:linear-gradient(90deg,#f6d9a8,#efc27a);border-radius:9px 0 0 9px"></div><div class="t" style="left:131px;top:9px;font-size:12px;color:#4a3a20">免费体验</div><div class="t" style="left:49px;top:13px;font-size:12px;color:#333">装配式</div><svg width="12" height="12" style="left:95px;top:13px"><path d="M3 6V4a3 3 0 0 1 6 0v2M2 6h8v6H2z" stroke="#555" stroke-width="1.2" fill="none"/></svg><svg width="24" height="14" style="left:13px;top:11px"><path d="M0 14l12-6 12 6z" fill="#5b6c93"/><path d="M2 6l4-2v5l-4 2zM7 4l4-2v5l-4 2z" fill="#b5bdd3"/></svg></div>
<div class="a" style="left:183px;top:230px;width:4px;height:470px;background:#e3e3e3;border-radius:2px"></div>
<div class="a" style="left:196px;top:188px;width:296px;height:232px;background:#fff;border:1px solid #dedede"></div>
<div class="a" style="left:197px;top:189px;width:294px;height:28px;background:#eeeef0"></div>
<div class="a" style="left:220px;top:189px;width:68px;height:28px;background:#fff"></div>
<div class="a" style="left:203px;top:196px;width:2px;height:2px;background:#777"></div><div class="a" style="left:207px;top:196px;width:2px;height:2px;background:#777"></div><div class="a" style="left:203px;top:200px;width:2px;height:2px;background:#777"></div><div class="a" style="left:207px;top:200px;width:2px;height:2px;background:#777"></div><div class="a" style="left:203px;top:204px;width:2px;height:2px;background:#777"></div><div class="a" style="left:207px;top:204px;width:2px;height:2px;background:#777"></div><div class="a" style="left:203px;top:208px;width:2px;height:2px;background:#777"></div><div class="a" style="left:207px;top:208px;width:2px;height:2px;background:#777"></div>
<div class="t" style="left:230px;top:196px;font-size:12px;color:#1a6fe0">构件列表</div>
<div class="t" style="left:298px;top:196px;font-size:12px;color:#333">图纸管理</div>
<div class="a" style="left:207px;top:224px;width:45px;height:26px;background:#f3f3f3;border-radius:3px"></div>
<div class="a" style="left:261px;top:224px;width:32px;height:26px;background:#f3f3f3;border-radius:3px"></div>
<div class="a" style="left:302px;top:224px;width:32px;height:26px;background:#f3f3f3;border-radius:3px"></div>
<div class="a" style="left:343px;top:224px;width:32px;height:26px;background:#f3f3f3;border-radius:3px"></div>
<div class="a" style="left:384px;top:224px;width:32px;height:26px;background:#f3f3f3;border-radius:3px"></div>
<div class="a" style="left:205px;top:257px;width:290px;height:25px;background:#f3f3f3;border-radius:12px"></div>
<svg width="18" height="18" viewBox="0 0 18 18" style="left:214px;top:228px" fill="none" stroke-linecap="round" stroke-linejoin="round" stroke-width="2.2"><path d="M2 3h8l5 5v8a1.5 1.5 0 0 1-1.5 1.5h-10A1.5 1.5 0 0 1 2 16z M10 3v5h5" stroke="#454b57" stroke-width="1.3"/><path d="M0.5 0.5l3 3M3.5 0.5l-3 3M2 0v4M0 2h4" stroke="#2a7be4" stroke-width=".9"/></svg><div class="a" style="left:240px;top:224px;width:1px;height:26px;background:#fff"></div><svg width="6" height="4" viewBox="0 0 6 4" style="left:244px;top:236px" fill="none" stroke-linecap="round" stroke-linejoin="round" stroke-width="2.2"><path d="M0 0h6L3 3z" fill="#888" stroke="none"/></svg><svg width="18" height="18" viewBox="0 0 18 18" style="left:268px;top:228px" fill="none" stroke-linecap="round" stroke-linejoin="round" stroke-width="2.2"><rect x="1" y="6" width="10" height="10" rx="2" stroke="#454b57" stroke-width="1.3" fill="#fff"/><rect x="6" y="1" width="10" height="10" rx="2" stroke="#2a7be4" stroke-width="1.3" fill="#c5dbf7"/></svg><svg width="18" height="18" viewBox="0 0 18 18" style="left:310px;top:228px" fill="none" stroke-linecap="round" stroke-linejoin="round" stroke-width="2.2"><path d="M2 4h14M6 4V2h6v2M4 4l1 12h8l1-12" stroke="#454b57" stroke-width="1.3"/><path d="M7.5 8v5M10.5 8v5" stroke="#e02020" stroke-width="1.3"/></svg><svg width="18" height="18" viewBox="0 0 18 18" style="left:351px;top:228px" fill="none" stroke-linecap="round" stroke-linejoin="round" stroke-width="2.2"><path d="M1 9v6a1.5 1.5 0 0 0 1.5 1.5H9M3.5 7v5.5A1.5 1.5 0 0 0 5 14h6" stroke="#454b57" stroke-width="1.2"/><rect x="6" y="1" width="10" height="10" rx="2" stroke="#2a7be4" stroke-width="1.3" fill="#e3eefb"/></svg><svg width="18" height="18" viewBox="0 0 18 18" style="left:392px;top:228px" fill="none" stroke-linecap="round" stroke-linejoin="round" stroke-width="2.2"><path d="M2 2h11l3 3v11H2z M5 2v5h7V2M5 16v-5h5" stroke="#454b57" stroke-width="1.3"/><rect x="11" y="11" width="6" height="6" fill="#5f9be0" stroke="none"/></svg>
<div class="t" style="left:217px;top:263px;font-size:12px;color:#999">搜索构件...</div>
<div class="a" style="left:209px;top:294px;width:105px;height:21px;background:#c3daf3;border-radius:3px"></div>
<div class="t" style="left:212px;top:298px;font-size:12px;color:#333">JLQ-1&nbsp; &lt;0&gt;&nbsp; [外墙]</div>
<div class="a" style="left:196px;top:424px;width:296px;height:586px;background:#fff;border:1px solid #dedede"></div>
<div class="a" style="left:197px;top:425px;width:294px;height:29px;background:#eeeef0"></div>
<div class="a" style="left:220px;top:425px;width:68px;height:29px;background:#fff"></div>
<div class="a" style="left:203px;top:432px;width:2px;height:2px;background:#777"></div><div class="a" style="left:207px;top:432px;width:2px;height:2px;background:#777"></div><div class="a" style="left:203px;top:436px;width:2px;height:2px;background:#777"></div><div class="a" style="left:207px;top:436px;width:2px;height:2px;background:#777"></div><div class="a" style="left:203px;top:440px;width:2px;height:2px;background:#777"></div><div class="a" style="left:207px;top:440px;width:2px;height:2px;background:#777"></div><div class="a" style="left:203px;top:444px;width:2px;height:2px;background:#777"></div><div class="a" style="left:207px;top:444px;width:2px;height:2px;background:#777"></div>
<div class="t" style="left:230px;top:432px;font-size:12px;color:#1a6fe0">属性列表</div>
<div class="t" style="left:298px;top:432px;font-size:12px;color:#333">图层管理</div>
<div class="a" style="left:197px;top:455px;width:294px;height:24px;background:#ededed;border-bottom:1px solid #dcdcdc"></div>
<div class="a" style="left:297px;top:455px;width:1px;height:23px;background:#d8d8d8"></div>
<div class="t" style="left:223px;top:460px;font-size:12px;color:#333">属性名称</div>
<div class="t" style="left:349px;top:460px;font-size:12px;color:#333">属性值</div>
<div class="a" style="left:197px;top:479px;width:294px;height:24px;background:#ededed"></div>
<div class="a" style="left:205px;top:489px;width:0;height:0;border-left:3px solid transparent;border-right:3px solid transparent;border-top:4px solid #777"></div>
<div class="t" style="left:218px;top:485px;font-size:12px;color:#333">基础属性</div>
<div class="t" style="left:212px;top:510px;font-size:12px;color:#1a6fe0">名称</div>
<div class="a" style="left:298px;top:506px;width:138px;height:21px;border:1px solid #e0e0e0;background:#fff"></div>
<div class="t" style="left:301px;top:510px;font-size:12px;color:#333">JLQ-1</div>
<div class="a" style="left:452px;top:512px;width:9px;height:9px;border:1px solid #aab;border-radius:50%;background:#e2e3e8"></div>
<div class="t" style="left:212px;top:535px;font-size:12px;color:#1a6fe0">厚度(mm)</div>
<div class="a" style="left:298px;top:531px;width:138px;height:21px;border:1px solid #e0e0e0;background:#fff"></div>
<div class="t" style="left:301px;top:535px;font-size:12px;color:#333">300</div>
<div class="a" style="left:452px;top:537px;width:9px;height:9px;border:1px solid #aab;border-radius:50%;background:#e2e3e8"></div>
<div class="t" style="left:212px;top:560px;font-size:12px;color:#333">房间边界</div>
<div class="a" style="left:298px;top:556px;width:138px;height:21px;border:1px solid #e0e0e0;background:#fff"></div>
<div class="t" style="left:301px;top:560px;font-size:12px;color:#333">是</div>
<div class="a" style="left:452px;top:562px;width:9px;height:9px;border:1px solid #aab;border-radius:50%;background:#e2e3e8"></div>
<div class="t" style="left:212px;top:585px;font-size:12px;color:#333">轴线距左墙...</div>
<div class="a" style="left:298px;top:581px;width:138px;height:21px;border:1px solid #e0e0e0;background:#fff"></div>
<div class="t" style="left:301px;top:585px;font-size:12px;color:#333">(150)</div>
<div class="a" style="left:452px;top:587px;width:9px;height:9px;border:1px solid #aab;border-radius:50%;background:#e2e3e8"></div>
<div class="t" style="left:212px;top:610px;font-size:12px;color:#1a6fe0">水平分布钢筋</div>
<div class="a" style="left:298px;top:606px;width:138px;height:21px;border:1px solid #e0e0e0;background:#fff"></div>
<div class="t" style="left:301px;top:610px;font-size:12px;color:#333">(2)中12@200</div>
<div class="a" style="left:452px;top:612px;width:9px;height:9px;border:1px solid #aab;border-radius:50%;background:#e2e3e8"></div>
<div class="t" style="left:212px;top:635px;font-size:12px;color:#1a6fe0">垂直分布钢筋</div>
<div class="a" style="left:298px;top:631px;width:138px;height:21px;border:1px solid #e0e0e0;background:#fff"></div>
<div class="t" style="left:301px;top:635px;font-size:12px;color:#333">(2)中12@200</div>
<div class="a" style="left:452px;top:637px;width:9px;height:9px;border:1px solid #aab;border-radius:50%;background:#e2e3e8"></div>
<div class="t" style="left:212px;top:660px;font-size:12px;color:#1a6fe0">拉筋</div>
<div class="a" style="left:298px;top:656px;width:138px;height:21px;border:1px solid #e0e0e0;background:#fff"></div>
<div class="t" style="left:301px;top:660px;font-size:12px;color:#333">中6@600*600</div>
<div class="a" style="left:452px;top:662px;width:9px;height:9px;border:1px solid #aab;border-radius:50%;background:#e2e3e8"></div>
<div class="t" style="left:212px;top:685px;font-size:12px;color:#1a6fe0">材质</div>
<div class="a" style="left:298px;top:681px;width:138px;height:21px;border:1px solid #e0e0e0;background:#fff"></div>
<div class="t" style="left:301px;top:685px;font-size:12px;color:#333">现浇混凝土</div>
<div class="a" style="left:452px;top:687px;width:9px;height:9px;border:1px solid #aab;border-radius:50%;background:#e2e3e8"></div>
<div class="t" style="left:212px;top:710px;font-size:12px;color:#1a6fe0">混凝土类型</div>
<div class="a" style="left:298px;top:706px;width:138px;height:21px;border:1px solid #e0e0e0;background:#fff"></div>
<div class="t" style="left:301px;top:710px;font-size:12px;color:#333">(现浇混凝土    碎石5</div>
<div class="a" style="left:452px;top:712px;width:9px;height:9px;border:1px solid #aab;border-radius:50%;background:#e2e3e8"></div>
<div class="t" style="left:212px;top:735px;font-size:12px;color:#1a6fe0">混凝土强度...</div>
<div class="a" style="left:298px;top:731px;width:138px;height:21px;border:1px solid #e0e0e0;background:#fff"></div>
<div class="t" style="left:301px;top:735px;font-size:12px;color:#333">(C30)</div>
<div class="a" style="left:452px;top:737px;width:9px;height:9px;border:1px solid #aab;border-radius:50%;background:#e2e3e8"></div>
<div class="t" style="left:212px;top:760px;font-size:12px;color:#1a6fe0">混凝土外加剂</div>
<div class="a" style="left:298px;top:756px;width:138px;height:21px;border:1px solid #e0e0e0;background:#fff"></div>
<div class="t" style="left:301px;top:760px;font-size:12px;color:#333">(无)</div>
<div class="a" style="left:452px;top:762px;width:9px;height:9px;border:1px solid #aab;border-radius:50%;background:#e2e3e8"></div>
<div class="t" style="left:212px;top:785px;font-size:12px;color:#333">抗渗等级</div>
<div class="a" style="left:298px;top:781px;width:138px;height:21px;border:1px solid #e0e0e0;background:#fff"></div>
<div class="t" style="left:301px;top:785px;font-size:12px;color:#333">无</div>
<div class="a" style="left:452px;top:787px;width:9px;height:9px;border:1px solid #aab;border-radius:50%;background:#e2e3e8"></div>
<div class="t" style="left:212px;top:810px;font-size:12px;color:#1a6fe0">泵送类型</div>
<div class="a" style="left:298px;top:806px;width:138px;height:21px;border:1px solid #e0e0e0;background:#fff"></div>
<div class="t" style="left:301px;top:810px;font-size:12px;color:#333">(混凝土泵)</div>
<div class="a" style="left:452px;top:812px;width:9px;height:9px;border:1px solid #aab;border-radius:50%;background:#e2e3e8"></div>
<div class="t" style="left:212px;top:835px;font-size:12px;color:#333">泵送高度(m)</div>
<div class="a" style="left:298px;top:831px;width:138px;height:21px;border:1px solid #e0e0e0;background:#fff"></div>
<div class="t" style="left:301px;top:835px;font-size:12px;color:#333"></div>
<div class="a" style="left:452px;top:837px;width:9px;height:9px;border:1px solid #aab;border-radius:50%;background:#e2e3e8"></div>
<div class="t" style="left:212px;top:860px;font-size:12px;color:#333">内/外墙标志</div>
<div class="a" style="left:298px;top:856px;width:138px;height:21px;border:1px solid #e0e0e0;background:#fff"></div>
<div class="t" style="left:301px;top:860px;font-size:12px;color:#333">(外墙)</div>
<div class="a" style="left:452px;top:862px;width:9px;height:9px;border:1px solid #aab;border-radius:50%;background:#e2e3e8"></div>
<div class="t" style="left:212px;top:885px;font-size:12px;color:#1a6fe0">类别</div>
<div class="a" style="left:298px;top:881px;width:138px;height:21px;border:1px solid #e0e0e0;background:#fff"></div>
<div class="t" style="left:301px;top:885px;font-size:12px;color:#333">混凝土墙</div>
<div class="a" style="left:452px;top:887px;width:9px;height:9px;border:1px solid #aab;border-radius:50%;background:#e2e3e8"></div>
<div class="t" style="left:212px;top:910px;font-size:12px;color:#333">起点顶标高(m)</div>
<div class="a" style="left:298px;top:906px;width:138px;height:21px;border:1px solid #e0e0e0;background:#fff"></div>
<div class="t" style="left:301px;top:910px;font-size:12px;color:#333">层顶标高</div>
<div class="a" style="left:452px;top:912px;width:9px;height:9px;border:1px solid #aab;border-radius:50%;background:#e2e3e8"></div>
<div class="t" style="left:212px;top:935px;font-size:12px;color:#333">终点顶标高(m)</div>
<div class="a" style="left:298px;top:931px;width:138px;height:21px;border:1px solid #e0e0e0;background:#fff"></div>
<div class="t" style="left:301px;top:935px;font-size:12px;color:#333">层顶标高</div>
<div class="a" style="left:452px;top:937px;width:9px;height:9px;border:1px solid #aab;border-radius:50%;background:#e2e3e8"></div>
<div class="t" style="left:212px;top:960px;font-size:12px;color:#333">起点底标高(m)</div>
<div class="a" style="left:298px;top:956px;width:138px;height:21px;border:1px solid #e0e0e0;background:#fff"></div>
<div class="t" style="left:301px;top:960px;font-size:12px;color:#333">层底标高</div>
<div class="a" style="left:452px;top:962px;width:9px;height:9px;border:1px solid #aab;border-radius:50%;background:#e2e3e8"></div>
<div class="t" style="left:212px;top:985px;font-size:12px;color:#333">终点底标高(m)</div>
<div class="a" style="left:298px;top:981px;width:138px;height:21px;border:1px solid #e0e0e0;background:#fff"></div>
<div class="t" style="left:301px;top:985px;font-size:12px;color:#333">层底标高</div>
<div class="a" style="left:452px;top:987px;width:9px;height:9px;border:1px solid #aab;border-radius:50%;background:#e2e3e8"></div>
<div class="a" style="left:483px;top:505px;width:3px;height:405px;background:#e3e3e3;border-radius:2px"></div>
<div class="a" style="left:495px;top:188px;width:1132px;height:820px;background:#000;overflow:hidden">
<svg width="1132" height="820" style="left:0;top:0"><rect x="0" y="0" width="1132" height="5" fill="#707020"/><line x1="0" y1="5.5" x2="1132" y2="5.5" stroke="#800000" stroke-width="1"/><line x1="0" y1="12.5" x2="1132" y2="12.5" stroke="#c80000" stroke-width="1"/><line x1="0" y1="40.5" x2="1132" y2="40.5" stroke="#780000" stroke-width="1"/><line x1="0" y1="52.5" x2="1132" y2="52.5" stroke="#800000" stroke-width="1"/><line x1="0" y1="188.5" x2="1132" y2="188.5" stroke="#c00000" stroke-width="1"/><line x1="0" y1="363.5" x2="1132" y2="363.5" stroke="#c80000" stroke-width="1"/><line x1="0" y1="539.5" x2="1132" y2="539.5" stroke="#c00000" stroke-width="1"/><line x1="0" y1="675.5" x2="1132" y2="675.5" stroke="#900000" stroke-width="1"/><line x1="0" y1="687.5" x2="1132" y2="687.5" stroke="#900000" stroke-width="1"/><line x1="0" y1="715.5" x2="1132" y2="715.5" stroke="#ff0000" stroke-width="1"/><rect x="0" y="723" width="1132" height="5" fill="#707020"/><line x1="0" y1="722.5" x2="1132" y2="722.5" stroke="#900000" stroke-width="1"/><rect x="566" y="722" width="95" height="6" fill="#4b0a8c"/><rect x="566" y="722" width="6" height="6" fill="#a020ff"/><rect x="655" y="722" width="6" height="6" fill="#a020ff"/><line x1="0" y1="750.5" x2="1132" y2="750.5" stroke="#007800" stroke-width="1"/><line x1="0" y1="785.5" x2="1132" y2="785.5" stroke="#007800" stroke-width="1"/><line x1="121.5" y1="0" x2="121.5" y2="715" stroke="#900000" stroke-width="1"/><line x1="121.5" y1="716" x2="121.5" y2="797" stroke="#006800" stroke-width="1"/><line x1="117.5" y1="754" x2="125.5" y2="747" stroke="#00a000" stroke-width="1"/><polygon points="131.2,812.2 125.2,818.2 116.8,818.2 110.8,812.2 110.8,803.8 116.8,797.8 125.2,797.8 131.2,803.8" fill="none" stroke="#00a000" stroke-width="1"/><text x="121" y="814" fill="#fff" font-size="17" text-anchor="middle" font-family="Liberation Sans, sans-serif">2</text><line x1="261.5" y1="0" x2="261.5" y2="715" stroke="#900000" stroke-width="1"/><line x1="261.5" y1="716" x2="261.5" y2="797" stroke="#006800" stroke-width="1"/><line x1="257.5" y1="754" x2="265.5" y2="747" stroke="#00a000" stroke-width="1"/><polygon points="271.2,812.2 265.2,818.2 256.8,818.2 250.8,812.2 250.8,803.8 256.8,797.8 265.2,797.8 271.2,803.8" fill="none" stroke="#00a000" stroke-width="1"/><text x="261" y="814" fill="#fff" font-size="17" text-anchor="middle" font-family="Liberation Sans, sans-serif">3</text><line x1="402.5" y1="0" x2="402.5" y2="715" stroke="#900000" stroke-width="1"/><line x1="402.5" y1="716" x2="402.5" y2="797" stroke="#006800" stroke-width="1"/><line x1="398.5" y1="754" x2="406.5" y2="747" stroke="#00a000" stroke-width="1"/><polygon points="412.2,812.2 406.2,818.2 397.8,818.2 391.8,812.2 391.8,803.8 397.8,797.8 406.2,797.8 412.2,803.8" fill="none" stroke="#00a000" stroke-width="1"/><text x="402" y="814" fill="#fff" font-size="17" text-anchor="middle" font-family="Liberation Sans, sans-serif">4</text><line x1="542.5" y1="0" x2="542.5" y2="715" stroke="#900000" stroke-width="1"/><line x1="542.5" y1="716" x2="542.5" y2="797" stroke="#006800" stroke-width="1"/><line x1="538.5" y1="754" x2="546.5" y2="747" stroke="#00a000" stroke-width="1"/><polygon points="552.2,812.2 546.2,818.2 537.8,818.2 531.8,812.2 531.8,803.8 537.8,797.8 546.2,797.8 552.2,803.8" fill="none" stroke="#00a000" stroke-width="1"/><text x="542" y="814" fill="#fff" font-size="17" text-anchor="middle" font-family="Liberation Sans, sans-serif">5</text><line x1="683.5" y1="0" x2="683.5" y2="715" stroke="#900000" stroke-width="1"/><line x1="683.5" y1="716" x2="683.5" y2="797" stroke="#006800" stroke-width="1"/><line x1="679.5" y1="754" x2="687.5" y2="747" stroke="#00a000" stroke-width="1"/><polygon points="693.2,812.2 687.2,818.2 678.8,818.2 672.8,812.2 672.8,803.8 678.8,797.8 687.2,797.8 693.2,803.8" fill="none" stroke="#00a000" stroke-width="1"/><text x="683" y="814" fill="#fff" font-size="17" text-anchor="middle" font-family="Liberation Sans, sans-serif">6</text><line x1="823.5" y1="0" x2="823.5" y2="715" stroke="#900000" stroke-width="1"/><line x1="823.5" y1="716" x2="823.5" y2="797" stroke="#006800" stroke-width="1"/><line x1="819.5" y1="754" x2="827.5" y2="747" stroke="#00a000" stroke-width="1"/><polygon points="833.2,812.2 827.2,818.2 818.8,818.2 812.8,812.2 812.8,803.8 818.8,797.8 827.2,797.8 833.2,803.8" fill="none" stroke="#00a000" stroke-width="1"/><text x="823" y="814" fill="#fff" font-size="17" text-anchor="middle" font-family="Liberation Sans, sans-serif">7</text><line x1="964.5" y1="0" x2="964.5" y2="715" stroke="#900000" stroke-width="1"/><line x1="964.5" y1="716" x2="964.5" y2="797" stroke="#006800" stroke-width="1"/><line x1="960.5" y1="754" x2="968.5" y2="747" stroke="#00a000" stroke-width="1"/><polygon points="974.2,812.2 968.2,818.2 959.8,818.2 953.8,812.2 953.8,803.8 959.8,797.8 968.2,797.8 974.2,803.8" fill="none" stroke="#00a000" stroke-width="1"/><text x="964" y="814" fill="#fff" font-size="17" text-anchor="middle" font-family="Liberation Sans, sans-serif">8</text><line x1="1105.5" y1="0" x2="1105.5" y2="715" stroke="#c00000" stroke-width="1"/><line x1="1105.5" y1="716" x2="1105.5" y2="797" stroke="#006800" stroke-width="1"/><line x1="1101.5" y1="754" x2="1109.5" y2="747" stroke="#00a000" stroke-width="1"/><polygon points="1115.2,812.2 1109.2,818.2 1100.8,818.2 1094.8,812.2 1094.8,803.8 1100.8,797.8 1109.2,797.8 1115.2,803.8" fill="none" stroke="#00a000" stroke-width="1"/><text x="1105" y="814" fill="#fff" font-size="17" text-anchor="middle" font-family="Liberation Sans, sans-serif">9</text><text x="191.0" y="775" fill="#fff" font-size="17" text-anchor="middle" font-family="Liberation Sans, sans-serif">6000</text><text x="331.5" y="775" fill="#fff" font-size="17" text-anchor="middle" font-family="Liberation Sans, sans-serif">6000</text><text x="472.0" y="775" fill="#fff" font-size="17" text-anchor="middle" font-family="Liberation Sans, sans-serif">6000</text><text x="612.5" y="775" fill="#fff" font-size="17" text-anchor="middle" font-family="Liberation Sans, sans-serif">6000</text><text x="753.0" y="775" fill="#fff" font-size="17" text-anchor="middle" font-family="Liberation Sans, sans-serif">6000</text><text x="893.5" y="775" fill="#fff" font-size="17" text-anchor="middle" font-family="Liberation Sans, sans-serif">6000</text><text x="1034.5" y="775" fill="#fff" font-size="17" text-anchor="middle" font-family="Liberation Sans, sans-serif">6000</text><text x="613" y="811" fill="#fff" font-size="17" text-anchor="middle" font-family="Liberation Sans, sans-serif">54000</text><line x1="3.5" y1="696" x2="3.5" y2="715" stroke="#b00000" stroke-width="1"/><line x1="15.5" y1="696" x2="15.5" y2="715" stroke="#b00000" stroke-width="1"/><polygon points="22.2,720.2 16.2,726.2 7.8,726.2 1.8,720.2 1.8,711.8 7.8,705.8 16.2,705.8 22.2,711.8" fill="none" stroke="#00a000" stroke-width="1"/><text x="12" y="722" fill="#fff" font-size="16" text-anchor="middle" font-family="Liberation Sans, sans-serif">A</text><text x="-5" y="761" fill="#fff" font-size="17" font-family="Liberation Sans, sans-serif">500</text><text x="31" y="776" fill="#fff" font-size="17" font-family="Liberation Sans, sans-serif">6000</text><line x1="2" y1="737" x2="15" y2="730" stroke="#00a000" stroke-width="1"/><line x1="13" y1="737" x2="25" y2="730" stroke="#00a000" stroke-width="1"/><rect x="48" y="749" width="4" height="22" fill="#00e000"/><polygon points="50,741 45,751 55,751" fill="#00e000"/><rect x="50" y="768" width="22" height="4" fill="#ff1010"/><polygon points="80,770 70,765 70,775" fill="#ff1010"/><circle cx="50" cy="770" r="5" fill="#0010c0"/><text x="50" y="740" fill="#00e000" font-size="14" text-anchor="middle" font-family="Liberation Sans, sans-serif">Y</text><text x="86" y="776" fill="#ff1010" font-size="14" text-anchor="middle" font-family="Liberation Sans, sans-serif">X</text></svg>
</div>
<div class="a" style="left:1611px;top:568px;width:16px;height:62px;background:#505050;border-radius:4px 0 0 4px"></div>
<div class="t" style="left:1615px;top:590px;font-size:12px;color:#aaa">&gt;</div>
<div class="a" style="left:1594px;top:188px;width:33px;height:244px;background:#fff;border-radius:0 3px 0 0;border-right:1px solid #e0e0e0"></div>
<svg width="21" height="21" viewBox="0 0 21 21" style="left:1600px;top:200px" fill="none" stroke-linecap="round" stroke-linejoin="round" stroke-width="2.2"><circle cx="10.5" cy="10.5" r="8.5" stroke="#454b57" stroke-width="1.2"/><ellipse cx="10.5" cy="10.5" rx="10.5" ry="4.5" transform="rotate(-30 10.5 10.5)" stroke="#2a7be4" stroke-width="1.3"/></svg><svg width="21" height="21" viewBox="0 0 21 21" style="left:1600px;top:229px" fill="none" stroke-linecap="round" stroke-linejoin="round" stroke-width="2.2"><path d="M1.5 6.5h13v13h-13z M1.5 6.5l4-4h13v13l-4 4 M14.5 6.5l4-4" stroke="#454b57" stroke-width="1.2"/><text x="8" y="16.5" font-size="7" font-weight="bold" fill="#2a7be4" stroke="none" text-anchor="middle" font-family="Liberation Sans">3D</text></svg><svg width="21" height="21" viewBox="0 0 21 21" style="left:1600px;top:258px" fill="none" stroke-linecap="round" stroke-linejoin="round" stroke-width="2.2"><path d="M1.5 6.5h13v13h-13z M1.5 6.5l4-4h13v13l-4 4 M14.5 6.5l4-4" stroke="#454b57" stroke-width="1.2"/></svg><svg width="7" height="4" viewBox="0 0 7 4" style="left:1607px;top:286px" fill="none" stroke-linecap="round" stroke-linejoin="round" stroke-width="2.2"><path d="M0 0h7L3.5 4z" fill="#454b57" stroke="none"/></svg><svg width="21" height="21" viewBox="0 0 21 21" style="left:1600px;top:297px" fill="none" stroke-linecap="round" stroke-linejoin="round" stroke-width="2.2"><path d="M1.5 6.5h13v13h-13z" fill="#c8defa" stroke="#2a7be4" stroke-width="1.2"/><path d="M1.5 6.5l4-4h13v13l-4 4V6.5z" fill="#e6f0fd" stroke="#2a7be4" stroke-width="1.2"/></svg><svg width="7" height="4" viewBox="0 0 7 4" style="left:1607px;top:325px" fill="none" stroke-linecap="round" stroke-linejoin="round" stroke-width="2.2"><path d="M0 0h7L3.5 4z" fill="#454b57" stroke="none"/></svg><svg width="21" height="21" viewBox="0 0 21 21" style="left:1600px;top:337px" fill="none" stroke-linecap="round" stroke-linejoin="round" stroke-width="2.2"><path d="M1.5 6V1.5H6M15 1.5h4.5V6M19.5 15v4.5H15M6 19.5H1.5V15" stroke="#454b57" stroke-width="1.2"/></svg><svg width="21" height="21" viewBox="0 0 21 21" style="left:1600px;top:366px" fill="none" stroke-linecap="round" stroke-linejoin="round" stroke-width="2.2"><rect x="1.5" y="1.5" width="18" height="18" rx="2" stroke="#454b57" stroke-width="1" stroke-dasharray="2 1.5"/><path d="M10.5 5l5 2.8v5.5l-5 2.8-5-2.8V7.8z M5.5 7.8l5 2.8 5-2.8 M10.5 10.6v5.5" stroke="#2a7be4" stroke-width="1.1"/></svg><div class="a" style="left:1598px;top:392px;width:25px;height:1px;background:#555"></div><svg width="21" height="21" viewBox="0 0 21 21" style="left:1600px;top:399px" fill="none" stroke-linecap="round" stroke-linejoin="round" stroke-width="2.2"><path d="M8 19.5H1.5v-18h16V11" stroke="#454b57" stroke-width="1.2"/><path d="M4.5 6h2M8 6h6M4.5 10h2M8 10h5M4.5 14h2" stroke="#454b57" stroke-width="1.1"/><path d="M10 16.5c2-3 7-3 9 0-2 3-7 3-9 0z" stroke="#2a7be4" stroke-width="1.1"/><circle cx="14.5" cy="16.5" r="1.2" fill="#2a7be4" stroke="none"/></svg>
<div class="a" style="left:1631px;top:188px;width:289px;height:820px;background:#fff;border:1px solid #dcdcdc;border-right:none"></div>
<div class="a" style="left:1632px;top:189px;width:288px;height:29px;background:#eeeef0"></div>
<div class="a" style="left:1639px;top:197px;width:2px;height:2px;background:#777"></div><div class="a" style="left:1643px;top:197px;width:2px;height:2px;background:#777"></div><div class="a" style="left:1639px;top:201px;width:2px;height:2px;background:#777"></div><div class="a" style="left:1643px;top:201px;width:2px;height:2px;background:#777"></div><div class="a" style="left:1639px;top:205px;width:2px;height:2px;background:#777"></div><div class="a" style="left:1643px;top:205px;width:2px;height:2px;background:#777"></div><div class="a" style="left:1639px;top:209px;width:2px;height:2px;background:#777"></div><div class="a" style="left:1643px;top:209px;width:2px;height:2px;background:#777"></div>
<div class="t" style="left:1657px;top:196px;font-size:12px;color:#333">显示设置</div>
<svg width="11" height="11" viewBox="0 0 11 11" style="left:1899px;top:198px" fill="none" stroke-linecap="round" stroke-linejoin="round" stroke-width="2.2"><path d="M.5 .5l10 10M10.5 .5l-10 10" stroke="#8a8a8a" stroke-width="1.2"/></svg>
<div class="a" style="left:1632px;top:243px;width:288px;height:1px;background:#d0d0d0"></div>
<div class="a" style="left:1635px;top:220px;width:61px;height:24px;background:#fff;border:1px solid #d0d0d0;border-bottom:none;border-radius:3px 3px 0 0"></div>
<div class="t" style="left:1641px;top:226px;font-size:12px;color:#1a6fe0">图元显示</div>
<div class="a" style="left:1699px;top:222px;width:60px;height:21px;background:#dadada;border-radius:3px 3px 0 0"></div>
<div class="t" style="left:1705px;top:226px;font-size:12px;color:#333">楼层显示</div>
<div class="a" style="left:1635px;top:246px;width:282px;height:723px;border:1px solid #dcdcdc;background:#fff;overflow:hidden">
<div class="t" style="left:30px;width:80px;text-align:center;top:4px;font-size:12px;color:#333">图层构件</div><div class="t" style="left:134px;width:80px;text-align:center;top:4px;font-size:12px;color:#333">显示图元</div><div class="t" style="left:197px;width:80px;text-align:center;top:4px;font-size:12px;color:#333">显示名称</div><div class="a" style="left:142px;top:0;width:1px;height:723px;background:#dedede"></div><div class="a" style="left:205px;top:0;width:1px;height:723px;background:#dedede"></div><div class="a" style="left:268px;top:0;width:1px;height:723px;background:#dedede"></div><div class="a" style="left:0;top:21px;width:282px;height:1px;background:#dedede"></div><div class="a" style="left:2px;top:25.5px;width:13px;height:13px;border:1px solid #888;border-radius:2px;background:#fff"><div class="a" style="left:3px;top:5px;width:5px;height:1px;background:#333"></div></div><div class="t" style="left:21px;top:24.5px;font-size:12px;color:#333">所有构件</div><div class="a" style="left:167px;top:24px;width:14px;height:14px;border:1px solid #7a7a7a;border-radius:2px;background:#fff"><div class="a" style="left:1px;top:1px;width:10px;height:10px;background:#9cc8fb;border:1px solid #3b86e8"></div></div><div class="a" style="left:230px;top:24px;width:14px;height:14px;border:1px solid #7a7a7a;border-radius:2px;background:#fff"></div><div class="a" style="left:0;top:42px;width:282px;height:1px;background:#dedede"></div><div class="a" style="left:12px;top:46.5px;width:13px;height:13px;border:1px solid #888;border-radius:2px;background:#fff"><div class="a" style="left:3px;top:5px;width:5px;height:1px;background:#333"></div></div><div class="t" style="left:31px;top:45.5px;font-size:12px;color:#333">施工段</div><div class="a" style="left:167px;top:45px;width:14px;height:14px;border:1px solid #7a7a7a;border-radius:2px;background:#fff"><div class="a" style="left:1px;top:1px;width:10px;height:10px;background:#9cc8fb;border:1px solid #3b86e8"></div></div><div class="a" style="left:230px;top:45px;width:14px;height:14px;border:1px solid #7a7a7a;border-radius:2px;background:#fff"></div><div class="a" style="left:0;top:63px;width:282px;height:1px;background:#dedede"></div><div class="a" style="left:19px;top:73.5px;width:16px;height:1px;background:#d8d8d8"></div><div class="t" style="left:41px;top:66.5px;font-size:12px;color:#333">土方工程</div><div class="a" style="left:167px;top:66px;width:14px;height:14px;border:1px solid #7a7a7a;border-radius:2px;background:#fff"></div><div class="a" style="left:230px;top:66px;width:14px;height:14px;border:1px solid #7a7a7a;border-radius:2px;background:#fff"></div><div class="a" style="left:0;top:84px;width:282px;height:1px;background:#dedede"></div><div class="a" style="left:19px;top:94.5px;width:16px;height:1px;background:#d8d8d8"></div><div class="t" style="left:41px;top:87.5px;font-size:12px;color:#333">基础工程</div><div class="a" style="left:167px;top:87px;width:14px;height:14px;border:1px solid #7a7a7a;border-radius:2px;background:#fff"></div><div class="a" style="left:230px;top:87px;width:14px;height:14px;border:1px solid #7a7a7a;border-radius:2px;background:#fff"></div><div class="a" style="left:0;top:105px;width:282px;height:1px;background:#dedede"></div><div class="a" style="left:19px;top:115.5px;width:16px;height:1px;background:#d8d8d8"></div><div class="t" style="left:41px;top:108.5px;font-size:12px;color:#333">主体结构</div><div class="a" style="left:167px;top:108px;width:14px;height:14px;border-radius:2px;background:#2478e0"><svg width="14" height="14" style="left:0;top:0"><path d="M3 7.2 L6 10 L11 4" stroke="#fff" stroke-width="1.8" fill="none"/></svg></div><div class="a" style="left:230px;top:108px;width:14px;height:14px;border:1px solid #7a7a7a;border-radius:2px;background:#fff"></div><div class="a" style="left:0;top:126px;width:282px;height:1px;background:#dedede"></div><div class="a" style="left:19px;top:136.5px;width:16px;height:1px;background:#d8d8d8"></div><div class="t" style="left:41px;top:129.5px;font-size:12px;color:#333">二次结构</div><div class="a" style="left:167px;top:129px;width:14px;height:14px;border:1px solid #7a7a7a;border-radius:2px;background:#fff"></div><div class="a" style="left:230px;top:129px;width:14px;height:14px;border:1px solid #7a7a7a;border-radius:2px;background:#fff"></div><div class="a" style="left:0;top:147px;width:282px;height:1px;background:#dedede"></div><div class="a" style="left:19px;top:157.5px;width:16px;height:1px;background:#d8d8d8"></div><div class="t" style="left:41px;top:150.5px;font-size:12px;color:#333">装饰装修</div><div class="a" style="left:167px;top:150px;width:14px;height:14px;border:1px solid #7a7a7a;border-radius:2px;background:#fff"></div><div class="a" style="left:230px;top:150px;width:14px;height:14px;border:1px solid #7a7a7a;border-radius:2px;background:#fff"></div><div class="a" style="left:0;top:168px;width:282px;height:1px;background:#dedede"></div><div class="a" style="left:19px;top:178.5px;width:16px;height:1px;background:#d8d8d8"></div><div class="t" style="left:41px;top:171.5px;font-size:12px;color:#333">外墙工程</div><div class="a" style="left:167px;top:171px;width:14px;height:14px;border:1px solid #7a7a7a;border-radius:2px;background:#fff"></div><div class="a" style="left:230px;top:171px;width:14px;height:14px;border:1px solid #7a7a7a;border-radius:2px;background:#fff"></div><div class="a" style="left:0;top:189px;width:282px;height:1px;background:#dedede"></div><div class="a" style="left:19px;top:199.5px;width:16px;height:1px;background:#d8d8d8"></div><div class="t" style="left:41px;top:192.5px;font-size:12px;color:#333">其它土建</div><div class="a" style="left:167px;top:192px;width:14px;height:14px;border:1px solid #7a7a7a;border-radius:2px;background:#fff"></div><div class="a" style="left:230px;top:192px;width:14px;height:14px;border:1px solid #7a7a7a;border-radius:2px;background:#fff"></div><div class="a" style="left:0;top:210px;width:282px;height:1px;background:#dedede"></div><div class="a" style="left:19px;top:220.5px;width:16px;height:1px;background:#d8d8d8"></div><div class="t" style="left:41px;top:213.5px;font-size:12px;color:#333">钢筋工程</div><div class="a" style="left:167px;top:213px;width:14px;height:14px;border-radius:2px;background:#2478e0"><svg width="14" height="14" style="left:0;top:0"><path d="M3 7.2 L6 10 L11 4" stroke="#fff" stroke-width="1.8" fill="none"/></svg></div><div class="a" style="left:230px;top:213px;width:14px;height:14px;border:1px solid #7a7a7a;border-radius:2px;background:#fff"></div><div class="a" style="left:0;top:231px;width:282px;height:1px;background:#dedede"></div><div class="a" style="left:12px;top:235.5px;width:13px;height:13px;border:1px solid #888;border-radius:2px;background:#fff"><div class="a" style="left:3px;top:5px;width:5px;height:1px;background:#333"></div></div><div class="t" style="left:31px;top:234.5px;font-size:12px;color:#333">轴线</div><div class="a" style="left:167px;top:234px;width:14px;height:14px;border-radius:2px;background:#2478e0"><svg width="14" height="14" style="left:0;top:0"><path d="M3 7.2 L6 10 L11 4" stroke="#fff" stroke-width="1.8" fill="none"/></svg></div><div class="a" style="left:230px;top:234px;width:14px;height:14px;border:1px solid #c8c8c8;border-radius:2px;background:#f0f0f0"></div><div class="a" style="left:0;top:252px;width:282px;height:1px;background:#dedede"></div><div class="a" style="left:19px;top:262.5px;width:16px;height:1px;background:#d8d8d8"></div><div class="t" style="left:41px;top:255.5px;font-size:12px;color:#333">轴网</div><div class="a" style="left:167px;top:255px;width:14px;height:14px;border-radius:2px;background:#2478e0"><svg width="14" height="14" style="left:0;top:0"><path d="M3 7.2 L6 10 L11 4" stroke="#fff" stroke-width="1.8" fill="none"/></svg></div><div class="a" style="left:230px;top:255px;width:14px;height:14px;border:1px solid #c8c8c8;border-radius:2px;background:#f0f0f0"></div><div class="a" style="left:0;top:273px;width:282px;height:1px;background:#dedede"></div><div class="a" style="left:19px;top:283.5px;width:16px;height:1px;background:#d8d8d8"></div><div class="t" style="left:41px;top:276.5px;font-size:12px;color:#333">辅助轴线</div><div class="a" style="left:167px;top:276px;width:14px;height:14px;border-radius:2px;background:#2478e0"><svg width="14" height="14" style="left:0;top:0"><path d="M3 7.2 L6 10 L11 4" stroke="#fff" stroke-width="1.8" fill="none"/></svg></div><div class="a" style="left:230px;top:276px;width:14px;height:14px;border:1px solid #c8c8c8;border-radius:2px;background:#f0f0f0"></div><div class="a" style="left:0;top:294px;width:282px;height:1px;background:#dedede"></div><div class="a" style="left:12px;top:298.5px;width:13px;height:13px;border:1px solid #888;border-radius:2px;background:#fff"><div class="a" style="left:3px;top:5px;width:5px;height:1px;background:#333"></div></div><div class="t" style="left:31px;top:297.5px;font-size:12px;color:#333">柱</div><div class="a" style="left:167px;top:297px;width:14px;height:14px;border-radius:2px;background:#2478e0"><svg width="14" height="14" style="left:0;top:0"><path d="M3 7.2 L6 10 L11 4" stroke="#fff" stroke-width="1.8" fill="none"/></svg></div><div class="a" style="left:230px;top:297px;width:14px;height:14px;border:1px solid #7a7a7a;border-radius:2px;background:#fff"></div><div class="a" style="left:0;top:315px;width:282px;height:1px;background:#dedede"></div><div class="a" style="left:19px;top:325.5px;width:16px;height:1px;background:#d8d8d8"></div><div class="t" style="left:41px;top:318.5px;font-size:12px;color:#333">柱</div><div class="a" style="left:167px;top:318px;width:14px;height:14px;border-radius:2px;background:#2478e0"><svg width="14" height="14" style="left:0;top:0"><path d="M3 7.2 L6 10 L11 4" stroke="#fff" stroke-width="1.8" fill="none"/></svg></div><div class="a" style="left:230px;top:318px;width:14px;height:14px;border:1px solid #7a7a7a;border-radius:2px;background:#fff"></div><div class="a" style="left:0;top:336px;width:282px;height:1px;background:#dedede"></div><div class="a" style="left:19px;top:346.5px;width:16px;height:1px;background:#d8d8d8"></div><div class="t" style="left:41px;top:339.5px;font-size:12px;color:#333">构造柱</div><div class="a" style="left:167px;top:339px;width:14px;height:14px;border-radius:2px;background:#2478e0"><svg width="14" height="14" style="left:0;top:0"><path d="M3 7.2 L6 10 L11 4" stroke="#fff" stroke-width="1.8" fill="none"/></svg></div><div class="a" style="left:230px;top:339px;width:14px;height:14px;border:1px solid #7a7a7a;border-radius:2px;background:#fff"></div><div class="a" style="left:0;top:357px;width:282px;height:1px;background:#dedede"></div><div class="a" style="left:19px;top:367.5px;width:16px;height:1px;background:#d8d8d8"></div><div class="t" style="left:41px;top:360.5px;font-size:12px;color:#333">砌体柱</div><div class="a" style="left:167px;top:360px;width:14px;height:14px;border-radius:2px;background:#2478e0"><svg width="14" height="14" style="left:0;top:0"><path d="M3 7.2 L6 10 L11 4" stroke="#fff" stroke-width="1.8" fill="none"/></svg></div><div class="a" style="left:230px;top:360px;width:14px;height:14px;border:1px solid #7a7a7a;border-radius:2px;background:#fff"></div><div class="a" style="left:0;top:378px;width:282px;height:1px;background:#dedede"></div><div class="a" style="left:19px;top:388.5px;width:16px;height:1px;background:#d8d8d8"></div><div class="t" style="left:41px;top:381.5px;font-size:12px;color:#333">约束边缘非阴影区</div><div class="a" style="left:167px;top:381px;width:14px;height:14px;border-radius:2px;background:#2478e0"><svg width="14" height="14" style="left:0;top:0"><path d="M3 7.2 L6 10 L11 4" stroke="#fff" stroke-width="1.8" fill="none"/></svg></div><div class="a" style="left:230px;top:381px;width:14px;height:14px;border:1px solid #7a7a7a;border-radius:2px;background:#fff"></div><div class="a" style="left:0;top:399px;width:282px;height:1px;background:#dedede"></div><div class="a" style="left:12px;top:403.5px;width:13px;height:13px;border:1px solid #888;border-radius:2px;background:#fff"><div class="a" style="left:3px;top:5px;width:5px;height:1px;background:#333"></div></div><div class="t" style="left:31px;top:402.5px;font-size:12px;color:#333">墙</div><div class="a" style="left:167px;top:402px;width:14px;height:14px;border:1px solid #7a7a7a;border-radius:2px;background:#fff"><div class="a" style="left:1px;top:1px;width:10px;height:10px;background:#9cc8fb;border:1px solid #3b86e8"></div></div><div class="a" style="left:230px;top:402px;width:14px;height:14px;border:1px solid #7a7a7a;border-radius:2px;background:#fff"></div><div class="a" style="left:0;top:420px;width:282px;height:1px;background:#dedede"></div><div class="a" style="left:19px;top:430.5px;width:16px;height:1px;background:#d8d8d8"></div><div class="t" style="left:41px;top:423.5px;font-size:12px;color:#333">剪力墙</div><div class="a" style="left:167px;top:423px;width:14px;height:14px;border-radius:2px;background:#2478e0"><svg width="14" height="14" style="left:0;top:0"><path d="M3 7.2 L6 10 L11 4" stroke="#fff" stroke-width="1.8" fill="none"/></svg></div><div class="a" style="left:230px;top:423px;width:14px;height:14px;border:1px solid #7a7a7a;border-radius:2px;background:#fff"></div><div class="a" style="left:0;top:441px;width:282px;height:1px;background:#dedede"></div><div class="a" style="left:19px;top:451.5px;width:16px;height:1px;background:#d8d8d8"></div><div class="t" style="left:41px;top:444.5px;font-size:12px;color:#333">人防门框墙</div><div class="a" style="left:167px;top:444px;width:14px;height:14px;border-radius:2px;background:#2478e0"><svg width="14" height="14" style="left:0;top:0"><path d="M3 7.2 L6 10 L11 4" stroke="#fff" stroke-width="1.8" fill="none"/></svg></div><div class="a" style="left:230px;top:444px;width:14px;height:14px;border:1px solid #7a7a7a;border-radius:2px;background:#fff"></div><div class="a" style="left:0;top:462px;width:282px;height:1px;background:#dedede"></div><div class="a" style="left:19px;top:472.5px;width:16px;height:1px;background:#d8d8d8"></div><div class="t" style="left:41px;top:465.5px;font-size:12px;color:#333">砌体墙</div><div class="a" style="left:167px;top:465px;width:14px;height:14px;border-radius:2px;background:#2478e0"><svg width="14" height="14" style="left:0;top:0"><path d="M3 7.2 L6 10 L11 4" stroke="#fff" stroke-width="1.8" fill="none"/></svg></div><div class="a" style="left:230px;top:465px;width:14px;height:14px;border:1px solid #7a7a7a;border-radius:2px;background:#fff"></div><div class="a" style="left:0;top:483px;width:282px;height:1px;background:#dedede"></div><div class="a" style="left:19px;top:493.5px;width:16px;height:1px;background:#d8d8d8"></div><div class="t" style="left:41px;top:486.5px;font-size:12px;color:#333">砌体加筋</div><div class="a" style="left:167px;top:486px;width:14px;height:14px;border:1px solid #7a7a7a;border-radius:2px;background:#fff"></div><div class="a" style="left:230px;top:486px;width:14px;height:14px;border:1px solid #7a7a7a;border-radius:2px;background:#fff"></div><div class="a" style="left:0;top:504px;width:282px;height:1px;background:#dedede"></div><div class="a" style="left:19px;top:514.5px;width:16px;height:1px;background:#d8d8d8"></div><div class="t" style="left:41px;top:507.5px;font-size:12px;color:#333">保温墙</div><div class="a" style="left:167px;top:507px;width:14px;height:14px;border-radius:2px;background:#2478e0"><svg width="14" height="14" style="left:0;top:0"><path d="M3 7.2 L6 10 L11 4" stroke="#fff" stroke-width="1.8" fill="none"/></svg></div><div class="a" style="left:230px;top:507px;width:14px;height:14px;border:1px solid #7a7a7a;border-radius:2px;background:#fff"></div><div class="a" style="left:0;top:525px;width:282px;height:1px;background:#dedede"></div><div class="a" style="left:19px;top:535.5px;width:16px;height:1px;background:#d8d8d8"></div><div class="t" style="left:41px;top:528.5px;font-size:12px;color:#333">暗梁</div><div class="a" style="left:167px;top:528px;width:14px;height:14px;border:1px solid #7a7a7a;border-radius:2px;background:#fff"></div><div class="a" style="left:230px;top:528px;width:14px;height:14px;border:1px solid #7a7a7a;border-radius:2px;background:#fff"></div><div class="a" style="left:0;top:546px;width:282px;height:1px;background:#dedede"></div><div class="a" style="left:19px;top:556.5px;width:16px;height:1px;background:#d8d8d8"></div><div class="t" style="left:41px;top:549.5px;font-size:12px;color:#333">墙垛</div><div class="a" style="left:167px;top:549px;width:14px;height:14px;border-radius:2px;background:#2478e0"><svg width="14" height="14" style="left:0;top:0"><path d="M3 7.2 L6 10 L11 4" stroke="#fff" stroke-width="1.8" fill="none"/></svg></div><div class="a" style="left:230px;top:549px;width:14px;height:14px;border:1px solid #7a7a7a;border-radius:2px;background:#fff"></div><div class="a" style="left:0;top:567px;width:282px;height:1px;background:#dedede"></div><div class="a" style="left:19px;top:577.5px;width:16px;height:1px;background:#d8d8d8"></div><div class="t" style="left:41px;top:570.5px;font-size:12px;color:#333">幕墙</div><div class="a" style="left:167px;top:570px;width:14px;height:14px;border-radius:2px;background:#2478e0"><svg width="14" height="14" style="left:0;top:0"><path d="M3 7.2 L6 10 L11 4" stroke="#fff" stroke-width="1.8" fill="none"/></svg></div><div class="a" style="left:230px;top:570px;width:14px;height:14px;border:1px solid #7a7a7a;border-radius:2px;background:#fff"></div><div class="a" style="left:0;top:588px;width:282px;height:1px;background:#dedede"></div><div class="a" style="left:12px;top:592.5px;width:13px;height:13px;border:1px solid #888;border-radius:2px;background:#fff"><div class="a" style="left:3px;top:5px;width:5px;height:1px;background:#333"></div></div><div class="t" style="left:31px;top:591.5px;font-size:12px;color:#333">门窗洞</div><div class="a" style="left:167px;top:591px;width:14px;height:14px;border:1px solid #7a7a7a;border-radius:2px;background:#fff"><div class="a" style="left:1px;top:1px;width:10px;height:10px;background:#9cc8fb;border:1px solid #3b86e8"></div></div><div class="a" style="left:230px;top:591px;width:14px;height:14px;border:1px solid #7a7a7a;border-radius:2px;background:#fff"></div><div class="a" style="left:0;top:609px;width:282px;height:1px;background:#dedede"></div><div class="a" style="left:19px;top:619.5px;width:16px;height:1px;background:#d8d8d8"></div><div class="t" style="left:41px;top:612.5px;font-size:12px;color:#333">门</div><div class="a" style="left:167px;top:612px;width:14px;height:14px;border-radius:2px;background:#2478e0"><svg width="14" height="14" style="left:0;top:0"><path d="M3 7.2 L6 10 L11 4" stroke="#fff" stroke-width="1.8" fill="none"/></svg></div><div class="a" style="left:230px;top:612px;width:14px;height:14px;border:1px solid #7a7a7a;border-radius:2px;background:#fff"></div><div class="a" style="left:0;top:630px;width:282px;height:1px;background:#dedede"></div><div class="a" style="left:19px;top:640.5px;width:16px;height:1px;background:#d8d8d8"></div><div class="t" style="left:41px;top:633.5px;font-size:12px;color:#333">窗</div><div class="a" style="left:167px;top:633px;width:14px;height:14px;border-radius:2px;background:#2478e0"><svg width="14" height="14" style="left:0;top:0"><path d="M3 7.2 L6 10 L11 4" stroke="#fff" stroke-width="1.8" fill="none"/></svg></div><div class="a" style="left:230px;top:633px;width:14px;height:14px;border:1px solid #7a7a7a;border-radius:2px;background:#fff"></div><div class="a" style="left:0;top:651px;width:282px;height:1px;background:#dedede"></div><div class="a" style="left:19px;top:661.5px;width:16px;height:1px;background:#d8d8d8"></div><div class="t" style="left:41px;top:654.5px;font-size:12px;color:#333">门联窗</div><div class="a" style="left:167px;top:654px;width:14px;height:14px;border-radius:2px;background:#2478e0"><svg width="14" height="14" style="left:0;top:0"><path d="M3 7.2 L6 10 L11 4" stroke="#fff" stroke-width="1.8" fill="none"/></svg></div><div class="a" style="left:230px;top:654px;width:14px;height:14px;border:1px solid #7a7a7a;border-radius:2px;background:#fff"></div><div class="a" style="left:0;top:672px;width:282px;height:1px;background:#dedede"></div><div class="a" style="left:19px;top:682.5px;width:16px;height:1px;background:#d8d8d8"></div><div class="t" style="left:41px;top:675.5px;font-size:12px;color:#333">墙洞</div><div class="a" style="left:167px;top:675px;width:14px;height:14px;border-radius:2px;background:#2478e0"><svg width="14" height="14" style="left:0;top:0"><path d="M3 7.2 L6 10 L11 4" stroke="#fff" stroke-width="1.8" fill="none"/></svg></div><div class="a" style="left:230px;top:675px;width:14px;height:14px;border:1px solid #7a7a7a;border-radius:2px;background:#fff"></div><div class="a" style="left:0;top:693px;width:282px;height:1px;background:#dedede"></div><div class="a" style="left:19px;top:703.5px;width:16px;height:1px;background:#d8d8d8"></div><div class="t" style="left:41px;top:696.5px;font-size:12px;color:#333">带形窗</div><div class="a" style="left:167px;top:696px;width:14px;height:14px;border-radius:2px;background:#2478e0"><svg width="14" height="14" style="left:0;top:0"><path d="M3 7.2 L6 10 L11 4" stroke="#fff" stroke-width="1.8" fill="none"/></svg></div><div class="a" style="left:230px;top:696px;width:14px;height:14px;border:1px solid #7a7a7a;border-radius:2px;background:#fff"></div><div class="a" style="left:0;top:714px;width:282px;height:1px;background:#dedede"></div><div class="a" style="left:19px;top:724.5px;width:16px;height:1px;background:#d8d8d8"></div><div class="t" style="left:41px;top:717.5px;font-size:12px;color:#333">带形洞</div><div class="a" style="left:167px;top:717px;width:14px;height:14px;border-radius:2px;background:#2478e0"><svg width="14" height="14" style="left:0;top:0"><path d="M3 7.2 L6 10 L11 4" stroke="#fff" stroke-width="1.8" fill="none"/></svg></div><div class="a" style="left:230px;top:717px;width:14px;height:14px;border:1px solid #7a7a7a;border-radius:2px;background:#fff"></div><div class="a" style="left:8px;top:39px;width:1px;height:700px;background:#d8d8d8"></div><div class="a" style="left:18px;top:59px;width:1px;height:162px;background:#d8d8d8"></div><div class="a" style="left:18px;top:248px;width:1px;height:36px;background:#d8d8d8"></div><div class="a" style="left:18px;top:311px;width:1px;height:78px;background:#d8d8d8"></div><div class="a" style="left:18px;top:416px;width:1px;height:162px;background:#d8d8d8"></div><div class="a" style="left:18px;top:605px;width:1px;height:141px;background:#d8d8d8"></div><div class="a" style="left:8px;top:52px;width:4px;height:1px;background:#d8d8d8"></div><div class="a" style="left:8px;top:241px;width:4px;height:1px;background:#d8d8d8"></div><div class="a" style="left:8px;top:304px;width:4px;height:1px;background:#d8d8d8"></div><div class="a" style="left:8px;top:409px;width:4px;height:1px;background:#d8d8d8"></div><div class="a" style="left:8px;top:598px;width:4px;height:1px;background:#d8d8d8"></div><div class="a" style="left:273px;top:12px;width:4px;height:155px;background:#e6e6e6;border-radius:2px"></div>
</div>
<div class="a" style="left:1821px;top:976px;width:90px;height:25px;border:1px solid #cfcfcf;border-radius:3px;background:#fff"></div>
<div class="t" style="left:1830px;top:982px;font-size:12px;color:#333">恢复默认设置</div>
<div class="a" style="left:0;top:1040px;width:1920px;height:40px;background:linear-gradient(90deg,#1d5688 0%,#2a6fa3 3%,#4fa7d9 16%,#58b0de 26%,#42a0d6 34%,#3b93ce 44%,#2e80c6 55%,#2b78c0 68%,#2064ab 74%,#1c5590 77.5%,#1c4f86 100%);border-top:1px solid #1a3048"></div>
<svg width="120" height="40" style="left:1290px;top:1040px"><defs><linearGradient id="stk" x1="0" y1="0" x2="1" y2="0"><stop offset="0" stop-color="#b8dcf8" stop-opacity="0"/><stop offset=".5" stop-color="#b8dcf8" stop-opacity=".9"/><stop offset="1" stop-color="#b8dcf8" stop-opacity="0"/></linearGradient></defs><path d="M8 1 L30 1 Q62 16 100 40 L78 40 Q44 16 8 1z" fill="url(#stk)"/></svg>
<div class="a" style="left:76px;top:1041px;width:58px;height:38px;border:1px solid rgba(20,50,80,.55);box-shadow:inset 0 0 0 1px rgba(255,255,255,.45);border-radius:3px;background:linear-gradient(180deg,rgba(255,255,255,.35),rgba(255,255,255,.12) 50%,rgba(255,255,255,.05))"></div>
<div class="a" style="left:138px;top:1041px;width:58px;height:38px;border:1px solid rgba(20,50,80,.55);box-shadow:inset 0 0 0 1px rgba(255,255,255,.45);border-radius:3px;background:linear-gradient(180deg,rgba(255,255,255,.35),rgba(255,255,255,.12) 50%,rgba(255,255,255,.05))"></div>
<div class="a" style="left:200px;top:1041px;width:58px;height:38px;border:1px solid rgba(20,50,80,.55);box-shadow:inset 0 0 0 1px rgba(255,255,255,.45);border-radius:3px;background:linear-gradient(180deg,rgba(255,255,255,.35),rgba(255,255,255,.12) 50%,rgba(255,255,255,.05))"></div>
<div class="a" style="left:262px;top:1041px;width:58px;height:38px;border:1px solid rgba(20,50,80,.55);box-shadow:inset 0 0 0 1px rgba(255,255,255,.45);border-radius:3px;background:linear-gradient(180deg,rgba(255,255,255,.35),rgba(255,255,255,.12) 50%,rgba(255,255,255,.05))"></div>
<div class="a" style="left:0;top:1008px;width:1920px;height:32px;background:#fbfbfb;border-top:1px solid #e6e6e6"></div>
<div class="t" style="left:2px;top:1018px;font-size:12px;color:#333">层高： 3</div>
<div class="t" style="left:92px;top:1018px;font-size:12px;color:#333">标高： -0.15~2.85</div>
<div class="t" style="left:231px;top:1018px;font-size:12px;color:#333">选中图元：0</div>
<div class="t" style="left:342px;top:1018px;font-size:12px;color:#333">隐藏图元：0</div>
<div class="t" style="left:718px;top:1018px;font-size:12px;color:#333">按鼠标左键指定第一个角点，或拾取构件图元</div>
<div class="t" style="left:1824px;top:1018px;font-size:12px;color:#333">实时计算已完成</div>
<div class="a" style="left:1805px;top:1017px;width:14px;height:14px;border-radius:50%;background:#3cb83c"></div>
<svg width="14" height="14" viewBox="0 0 14 14" style="left:1805px;top:1017px" fill="none" stroke-linecap="round" stroke-linejoin="round" stroke-width="2.2"><path d="M3.5 7.2l2.5 2.5 4.5-5" stroke="#fff" stroke-width="1.8"/></svg>
<div class="a" style="left:452px;top:1012px;width:25px;height:25px;border:1px solid #bdbdbd;border-radius:3px;background:#fff"></div><div class="a" style="left:480px;top:1012px;width:36px;height:25px;border:1px solid #3d8ee6;border-radius:3px;background:#ddeaf9"></div><div class="a" style="left:522px;top:1012px;width:25px;height:25px;border:1px solid #bdbdbd;border-radius:3px;background:#fff"></div><div class="a" style="left:553px;top:1012px;width:35px;height:25px;border:1px solid #bdbdbd;border-radius:3px;background:#fff"></div><div class="a" style="left:592px;top:1012px;width:36px;height:25px;border:1px solid #bdbdbd;border-radius:3px;background:#fff"></div><div class="a" style="left:631px;top:1012px;width:25px;height:25px;border:1px solid #bdbdbd;border-radius:3px;background:#fff"></div><div class="a" style="left:659px;top:1012px;width:25px;height:25px;border:1px solid #bdbdbd;border-radius:3px;background:#fff"></div><svg width="18" height="18" viewBox="0 0 18 18" style="left:456px;top:1016px" fill="none" stroke-linecap="round" stroke-linejoin="round" stroke-width="2.2"><path d="M3 1.5v13h11M3 10.5h4v4" stroke="#454b57" stroke-width="1.2"/></svg><svg width="18" height="18" viewBox="0 0 18 18" style="left:484px;top:1016px" fill="none" stroke-linecap="round" stroke-linejoin="round" stroke-width="2.2"><rect x="2.5" y="2.5" width="13" height="13" rx="3" stroke="#454b57" stroke-width="1.2"/><circle cx="2.5" cy="2.5" r="1.6" fill="#fff" stroke="#2a7be4" stroke-width="1"/></svg><svg width="6" height="4" viewBox="0 0 6 4" style="left:508px;top:1023px" fill="none" stroke-linecap="round" stroke-linejoin="round" stroke-width="2.2"><path d="M0 0h6L3 3z" fill="#555" stroke="none"/></svg><svg width="18" height="18" viewBox="0 0 18 18" style="left:525px;top:1016px" fill="none" stroke-linecap="round" stroke-linejoin="round" stroke-width="2.2"><path d="M2 2l14 14M16 2L2 16" stroke="#888" stroke-width="1"/></svg><svg width="18" height="18" viewBox="0 0 18 18" style="left:557px;top:1016px" fill="none" stroke-linecap="round" stroke-linejoin="round" stroke-width="2.2"><path d="M1.5 15l10-10M1.5 15.5h12" stroke="#888" stroke-width="1.2"/><rect x="5" y="9" width="2.5" height="2.5" stroke="#555" stroke-width=".8"/></svg><svg width="6" height="4" viewBox="0 0 6 4" style="left:580px;top:1023px" fill="none" stroke-linecap="round" stroke-linejoin="round" stroke-width="2.2"><path d="M0 0h6L3 3z" fill="#555" stroke="none"/></svg><svg width="18" height="18" viewBox="0 0 18 18" style="left:595px;top:1016px" fill="none" stroke-linecap="round" stroke-linejoin="round" stroke-width="2.2"><path d="M4 2v7M0.5 5.5h7" stroke="#454b57" stroke-width="1.2"/><rect x="6" y="10" width="10" height="4" fill="#454b57" stroke="none"/></svg><svg width="6" height="4" viewBox="0 0 6 4" style="left:619px;top:1023px" fill="none" stroke-linecap="round" stroke-linejoin="round" stroke-width="2.2"><path d="M0 0h6L3 3z" fill="#555" stroke="none"/></svg><svg width="18" height="18" viewBox="0 0 18 18" style="left:634px;top:1016px" fill="none" stroke-linecap="round" stroke-linejoin="round" stroke-width="2.2"><path d="M2 3h11v10H2z" fill="#454b57" stroke="#454b57" stroke-width="1"/><path d="M13 5h2v10H4v-2" stroke="#454b57" stroke-width="1.2"/><path d="M12 12l5 3-5 2z" fill="#454b57" stroke="none"/></svg><svg width="18" height="18" viewBox="0 0 18 18" style="left:662px;top:1016px" fill="none" stroke-linecap="round" stroke-linejoin="round" stroke-width="2.2"><path d="M2 15L4 5l11-3" stroke="#888" stroke-width="1.1"/><rect x="1" y="14" width="2" height="2" stroke="#888" stroke-width=".8"/><rect x="14" y="1" width="2" height="2" stroke="#888" stroke-width=".8"/><path d="M11 9l5 3-5 3z" fill="#454b57" stroke="none"/></svg><svg width="18" height="18" viewBox="0 0 18 18" style="left:699px;top:1014px" fill="none" stroke-linecap="round" stroke-linejoin="round" stroke-width="2.2"><path d="M2 16L16 2M10 2h6v6M2 10v6h6" stroke="#333" stroke-width="1.3"/></svg>
<svg width="38" height="38" viewBox="0 0 38 38" style="left:8px;top:1041px" fill="none" stroke-linecap="round" stroke-linejoin="round" stroke-width="2.2"><defs><radialGradient id="orb" cx="50%" cy="35%" r="60%"><stop offset="0" stop-color="#9ad9f5"/><stop offset=".55" stop-color="#2a78b8"/><stop offset="1" stop-color="#0d3560"/></radialGradient></defs><circle cx="19" cy="19" r="18" fill="url(#orb)" stroke="#0b2a4a" stroke-width="1"/><path d="M9 12c3-1.5 5-1 8 .5l-1.5 6.5c-3-1.5-5-2-8-.5z" fill="#f25022" stroke="none"/><path d="M18 13c3 1.5 5 2 8.5.5L25 20c-3.5 1.5-5.5 1-8.5-.5z" fill="#7fba00" stroke="none"/><path d="M7 19.5c3-1.5 5-1 8 .5l-1.5 6.5c-3-1.5-5-2-8-.5z" fill="#00a4ef" stroke="none"/><path d="M16 20.5c3 1.5 5 2 8.5.5L23 27.5c-3.5 1.5-5.5 1-8.5-.5z" fill="#ffb900" stroke="none"/></svg><div class="a" style="left:57px;top:1045px;width:9px;height:30px;background-image:radial-gradient(circle,#10365c 1px,transparent 1.2px);background-size:3px 3.6px"></div><svg width="32" height="32" viewBox="0 0 32 32" style="left:89px;top:1044px" fill="none" stroke-linecap="round" stroke-linejoin="round" stroke-width="2.2"><path d="M24 7c-5-4-13-3-17 3s-3 15 3 18 14 1 15-5-5-9-9-7c-2 1-2 4 0 5" stroke="#2b8ff0" stroke-width="5.5"/><path d="M22 4c3-1 6 0 7 2" stroke="#2b8ff0" stroke-width="3"/></svg><svg width="32" height="32" viewBox="0 0 32 32" style="left:151px;top:1044px" fill="none" stroke-linecap="round" stroke-linejoin="round" stroke-width="2.2"><circle cx="16" cy="17" r="13" fill="#fff" stroke="none"/><circle cx="16" cy="17" r="10.5" fill="#4dbb2a" stroke="none"/><path d="M10 18h12.5c0-4.5-2.5-7-6.5-7s-6.5 3-6.5 6.5 2.5 7 6.5 7c2.5 0 4-1 5-2.5" stroke="#fff" stroke-width="3"/><path d="M5 27c-2-6 2-14 9-19 6-4 12-5 14-3" stroke="#3aa51a" stroke-width="2"/></svg><div class="a" style="left:213px;top:1044px;width:32px;height:32px;border-radius:6px;background:#e8f7f7"></div><svg width="32" height="32" viewBox="0 0 32 32" style="left:213px;top:1044px" fill="none" stroke-linecap="round" stroke-linejoin="round" stroke-width="2.2"><path d="M9 7h14v4h-5v10h5v4H9v-4h5V11H9z" fill="#2ab3c0" stroke="none"/></svg><div class="a" style="left:275px;top:1044px;width:32px;height:32px;border-radius:6px;background:#2a6ff5"></div><svg width="32" height="32" viewBox="0 0 32 32" style="left:275px;top:1044px" fill="none" stroke-linecap="round" stroke-linejoin="round" stroke-width="2.2"><path d="M6 13l20-6-1 5-9 2 1 11-5-3-1-8-5 1z" fill="#fff" stroke="none"/></svg><div class="a" style="left:1492px;top:1041px;width:428px;height:39px;background:linear-gradient(90deg,#1e5a93,#1c4f86 40%,#1a4a80)"></div><div class="a" style="left:1493px;top:1045px;width:9px;height:30px;background-image:radial-gradient(circle,#0c2848 1px,transparent 1.2px);background-size:3px 3.6px"></div><svg width="18" height="14" viewBox="0 0 18 14" style="left:1509px;top:1052px" fill="none" stroke-linecap="round" stroke-linejoin="round" stroke-width="2.2"><path d="M1 6h16v7H1z" fill="#d8d8d8" stroke="#888" stroke-width=".8"/><path d="M3 8h2M6 8h2M9 8h2M12 8h2M4 11h10M10 6c0-3 3-2 6-5" stroke="#777" stroke-width=".9"/></svg><svg width="16" height="16" viewBox="0 0 16 16" style="left:1532px;top:1050px" fill="none" stroke-linecap="round" stroke-linejoin="round" stroke-width="2.2"><circle cx="8" cy="8" r="7.5" fill="#1d2ea8" stroke="#ccc" stroke-width="1"/><text x="8" y="12" font-size="11" font-weight="bold" fill="#fff" stroke="none" text-anchor="middle" font-family="Liberation Sans">?</text></svg><svg width="12" height="20" viewBox="0 0 12 20" style="left:1556px;top:1048px" fill="none" stroke-linecap="round" stroke-linejoin="round" stroke-width="2.2"><rect x="3" y="3" width="6" height="4" stroke="#fff" stroke-width="1"/><rect x="1" y="5" width="6" height="4" fill="#1c4f86" stroke="#fff" stroke-width="1"/><path d="M3 14h6l-3 3z" fill="#fff" stroke="none"/></svg><svg width="17" height="17" viewBox="0 0 17 17" style="left:1575px;top:1050px" fill="none" stroke-linecap="round" stroke-linejoin="round" stroke-width="2.2"><path d="M14 3c-4-3-11-2-12 4s3 9 7 8 5-5 2-6-4 1-3 2" stroke="#2b8ff0" stroke-width="2.6"/></svg><div class="a" style="left:1600px;top:1050px;width:16px;height:17px;background:#fff;border-radius:2px"></div><svg width="16" height="17" viewBox="0 0 16 17" style="left:1600px;top:1050px" fill="none" stroke-linecap="round" stroke-linejoin="round" stroke-width="2.2"><path d="M3 8l5-5 5 5" stroke="#2a7be4" stroke-width="2"/><rect x="2" y="10" width="12" height="5" fill="#f08a24" stroke="none"/></svg><svg width="17" height="17" viewBox="0 0 17 17" style="left:1624px;top:1050px" fill="none" stroke-linecap="round" stroke-linejoin="round" stroke-width="2.2"><circle cx="8.5" cy="8.5" r="7.5" fill="#4dbb2a" stroke="#cfc" stroke-width="1"/><path d="M5 9h7c0-2.5-1.5-4-3.5-4S5 6.5 5 8.5s1.5 4 3.5 4c1.5 0 2.5-.5 3-1.5" stroke="#fff" stroke-width="1.6"/></svg><svg width="18" height="19" viewBox="0 0 18 19" style="left:1648px;top:1049px" fill="none" stroke-linecap="round" stroke-linejoin="round" stroke-width="2.2"><rect x="2" y="1" width="6" height="9" fill="#aaa" stroke="none"/><rect x="3" y="10" width="4" height="6" fill="#555" stroke="none"/><circle cx="12" cy="13" r="5" fill="#3aa51a" stroke="none"/><path d="M9.5 13l2 2 3-4" stroke="#fff" stroke-width="1.4"/></svg><svg width="17" height="17" viewBox="0 0 17 17" style="left:1672px;top:1050px" fill="none" stroke-linecap="round" stroke-linejoin="round" stroke-width="2.2"><path d="M1 6h4l5-4v13l-5-4H1z" fill="#e04a1a" stroke="none"/><path d="M12 5c2 2 2 5 0 7M14 3c3 3 3 8 0 11" stroke="#c33" stroke-width="1"/></svg><svg width="17" height="17" viewBox="0 0 17 17" style="left:1696px;top:1050px" fill="none" stroke-linecap="round" stroke-linejoin="round" stroke-width="2.2"><circle cx="8.5" cy="8.5" r="7.5" fill="#f2d21b" stroke="#6c3" stroke-width="1.2"/><path d="M8.5 4v9M4 8.5h9" stroke="#1c6a10" stroke-width="2.2"/></svg><div class="a" style="left:1720px;top:1050px;width:17px;height:17px;background:#f6a623;border-radius:3px"></div><svg width="17" height="17" viewBox="0 0 17 17" style="left:1720px;top:1050px" fill="none" stroke-linecap="round" stroke-linejoin="round" stroke-width="2.2"><path d="M4 12c-2 0-3-2-2-3.5S4 6 5 7c0-3 4-4 6-2 1-1 4 0 4 3s-2 4-4 4H7" stroke="#fff" stroke-width="1.6"/></svg><svg width="18" height="17" viewBox="0 0 18 17" style="left:1743px;top:1050px" fill="none" stroke-linecap="round" stroke-linejoin="round" stroke-width="2.2"><path d="M2 14h2v2H2zM6 11h2v5H6zM10 7h2v9h-2zM14 3h2v13h-2z" fill="#fff" stroke="none"/></svg><svg width="17" height="17" viewBox="0 0 17 17" style="left:1767px;top:1050px" fill="none" stroke-linecap="round" stroke-linejoin="round" stroke-width="2.2"><path d="M1 6h3l5-4v13l-5-4H1z" fill="#f0f0f0" stroke="none"/><path d="M11 5c1.5 2 1.5 5 0 7M13.5 3c2.5 3 2.5 8 0 11" stroke="#f0f0f0" stroke-width="1.2"/></svg><div class="a" style="left:1878px;top:1054px;width:16px;height:14px;background:#fff"></div><svg width="6" height="8" viewBox="0 0 6 8" style="left:1883px;top:1057px" fill="none" stroke-linecap="round" stroke-linejoin="round" stroke-width="2.2"><path d="M0 0l5 4-5 4z" fill="#111" stroke="none"/></svg><div class="a" style="left:1906px;top:1041px;width:14px;height:39px;background:linear-gradient(90deg,#3c6d9e,#274f7c);border-left:1px solid #6a9bc8"></div>
<div class="t" style="left:1815px;top:1044px;font-size:13px;color:#fff">9:14</div>
<div class="t" style="left:1799px;top:1061px;font-size:13px;color:#fff">2024/12/1</div>
<div class="a" style="left:408px;top:156px;width:1105px;height:729px;background:#fff;box-shadow:0 0 2px 1px rgba(0,0,0,.45),0 0 13px 2px rgba(0,0,0,.4)"></div>
<div class="t" style="left:419px;top:167px;font-size:14px;color:#333">计算设置</div>
<div class="a" style="left:1432px;top:177px;width:11px;height:1px;background:#555"></div>
<div class="a" style="left:1461px;top:169px;width:11px;height:11px;border:1px solid #555"></div>
<svg width="12" height="12" style="left:1488px;top:169px"><path d="M0.5 0.5 L11.5 11.5 M11.5 0.5 L0.5 11.5" stroke="#555" stroke-width="1.2"/></svg>
<div class="a" style="left:419px;top:221px;width:1082px;height:619px;border:1px solid #d0d0d0;background:#fff"></div>
<div class="a" style="left:419px;top:199px;width:62px;height:22px;background:#e4e4e4;border-radius:3px 3px 0 0"></div>
<div class="t" style="left:419px;width:62px;text-align:center;top:203px;font-size:12px;color:#333">计算规则</div>
<div class="a" style="left:484px;top:199px;width:59px;height:22px;background:#e4e4e4;border-radius:3px 3px 0 0"></div>
<div class="t" style="left:484px;width:59px;text-align:center;top:203px;font-size:12px;color:#333">节点设置</div>
<div class="a" style="left:547px;top:199px;width:60px;height:22px;background:#e4e4e4;border-radius:3px 3px 0 0"></div>
<div class="t" style="left:547px;width:60px;text-align:center;top:203px;font-size:12px;color:#333">箍筋设置</div>
<div class="a" style="left:610px;top:195px;width:59px;height:27px;background:#fff;border:1px solid #d0d0d0;border-bottom:none;border-radius:3px 3px 0 0"></div>
<div class="t" style="left:610px;width:59px;text-align:center;top:201px;font-size:12px;color:#1a6fe0">搭接设置</div>
<div class="a" style="left:673px;top:199px;width:59px;height:22px;background:#e4e4e4;border-radius:3px 3px 0 0"></div>
<div class="t" style="left:673px;width:59px;text-align:center;top:203px;font-size:12px;color:#333">箍筋公式</div>
<div class="a" style="left:430px;top:230px;width:1060px;height:578px;border:1px solid #c8c8c8;background:#fff;overflow:hidden">
<div class="a" style="left:-1px;top:0px;width:1060px;height:34px;background:#efefef"></div><div class="a" style="left:276px;top:0px;width:640px;height:17px;background:#7fb8f6"></div><div class="a" style="left:702px;top:17px;width:71px;height:17px;background:#7fb8f6"></div><div class="a" style="left:-1px;top:33px;width:1060px;height:1px;background:#c8c8c8"></div><div class="a" style="left:276px;top:16px;width:640px;height:1px;background:#c9dff5"></div><div class="a" style="left:20px;top:0px;width:1px;height:34px;background:#d2d2d2"></div><div class="a" style="left:276px;top:0px;width:1px;height:34px;background:#d2d2d2"></div><div class="a" style="left:347px;top:17px;width:1px;height:17px;background:#d2d2d2"></div><div class="a" style="left:418px;top:17px;width:1px;height:17px;background:#d2d2d2"></div><div class="a" style="left:489px;top:17px;width:1px;height:17px;background:#d2d2d2"></div><div class="a" style="left:560px;top:17px;width:1px;height:17px;background:#d2d2d2"></div><div class="a" style="left:631px;top:17px;width:1px;height:17px;background:#d2d2d2"></div><div class="a" style="left:702px;top:17px;width:1px;height:17px;background:#d2d2d2"></div><div class="a" style="left:773px;top:17px;width:1px;height:17px;background:#d2d2d2"></div><div class="a" style="left:844px;top:17px;width:1px;height:17px;background:#d2d2d2"></div><div class="a" style="left:915px;top:0px;width:1px;height:34px;background:#d2d2d2"></div><div class="a" style="left:986px;top:0px;width:1px;height:34px;background:#d2d2d2"></div><div class="a" style="left:1057px;top:0px;width:1px;height:34px;background:#d2d2d2"></div><div class="t" style="left:20px;top:10px;width:256px;text-align:center;font-size:12px;color:#333;">钢筋直径范围</div><div class="t" style="left:276px;top:2px;width:640px;text-align:center;font-size:12px;color:#333;color:#fff">连接形式</div><div class="t" style="left:276px;top:19px;width:71px;text-align:center;font-size:12px;color:#333;">基础</div><div class="t" style="left:347px;top:19px;width:71px;text-align:center;font-size:12px;color:#333;">框架梁</div><div class="t" style="left:418px;top:19px;width:71px;text-align:center;font-size:12px;color:#333;">非框架梁</div><div class="t" style="left:489px;top:19px;width:71px;text-align:center;font-size:12px;color:#333;">柱</div><div class="t" style="left:560px;top:19px;width:71px;text-align:center;font-size:12px;color:#333;">板</div><div class="t" style="left:631px;top:19px;width:71px;text-align:center;font-size:12px;color:#333;">墙水平筋</div><div class="t" style="left:702px;top:19px;width:71px;text-align:center;font-size:12px;color:#333;color:#fff">墙垂直筋</div><div class="t" style="left:773px;top:19px;width:71px;text-align:center;font-size:12px;color:#333;">其它</div><div class="t" style="left:844px;top:19px;width:71px;text-align:center;font-size:12px;color:#333;">基坑支护</div><div class="t" style="left:915px;top:2px;width:71px;text-align:center;font-size:12px;color:#333;">墙柱垂直筋</div><div class="t" style="left:915px;top:19px;width:71px;text-align:center;font-size:12px;color:#333;">定尺</div><div class="t" style="left:986px;top:2px;width:71px;text-align:center;font-size:12px;color:#333;">其余钢筋定</div><div class="t" style="left:986px;top:19px;width:71px;text-align:center;font-size:12px;color:#333;">尺</div><div class="a" style="left:-1px;top:34px;width:21px;height:21px;background:#efefef"></div><div class="t" style="left:-1px;top:38px;width:21px;text-align:center;font-size:12px;color:#333;">1</div><div class="a" style="left:20px;top:34px;width:1039px;height:21px;background:#fefbe6"></div><div class="a" style="left:23px;top:37px;width:13px;height:13px;border:1px solid #8a8a8a;border-radius:2px;background:#fff"></div><div class="a" style="left:26px;top:43px;width:7px;height:1px;background:#444"></div><div class="t" style="left:42px;top:38px;font-size:12px;color:#333;">HPB235,HPB300</div><div class="a" style="left:-1px;top:54px;width:1060px;height:1px;background:#d6d6d6"></div><div class="a" style="left:-1px;top:55px;width:21px;height:21px;background:#efefef"></div><div class="t" style="left:-1px;top:59px;width:21px;text-align:center;font-size:12px;color:#333;">2</div><div class="a" style="left:29px;top:65px;width:17px;height:1px;background:#d6d6d6"></div><div class="t" style="left:52px;top:59px;font-size:12px;color:#333;">3~10</div><div class="t" style="left:280px;top:59px;font-size:12px;color:#333;">绑扎</div><div class="t" style="left:351px;top:59px;font-size:12px;color:#333;">绑扎</div><div class="t" style="left:422px;top:59px;font-size:12px;color:#333;">绑扎</div><div class="t" style="left:493px;top:59px;font-size:12px;color:#333;">绑扎</div><div class="t" style="left:564px;top:59px;font-size:12px;color:#333;">绑扎</div><div class="t" style="left:635px;top:59px;font-size:12px;color:#333;">绑扎</div><div class="t" style="left:706px;top:59px;font-size:12px;color:#333;">绑扎</div><div class="t" style="left:777px;top:59px;font-size:12px;color:#333;">绑扎</div><div class="t" style="left:848px;top:59px;font-size:12px;color:#333;">绑扎</div><div class="t" style="left:919px;top:59px;font-size:12px;color:#333;">8000</div><div class="t" style="left:990px;top:59px;font-size:12px;color:#333;">8000</div><div class="a" style="left:-1px;top:75px;width:1060px;height:1px;background:#d6d6d6"></div><div class="a" style="left:-1px;top:76px;width:21px;height:21px;background:#efefef"></div><div class="t" style="left:-1px;top:80px;width:21px;text-align:center;font-size:12px;color:#333;">3</div><div class="a" style="left:29px;top:86px;width:17px;height:1px;background:#d6d6d6"></div><div class="t" style="left:52px;top:80px;font-size:12px;color:#333;">12~14</div><div class="t" style="left:280px;top:80px;font-size:12px;color:#333;">绑扎</div><div class="t" style="left:351px;top:80px;font-size:12px;color:#333;">绑扎</div><div class="t" style="left:422px;top:80px;font-size:12px;color:#333;">绑扎</div><div class="t" style="left:493px;top:80px;font-size:12px;color:#333;">绑扎</div><div class="t" style="left:564px;top:80px;font-size:12px;color:#333;">绑扎</div><div class="t" style="left:635px;top:80px;font-size:12px;color:#333;">绑扎</div><div class="t" style="left:706px;top:80px;font-size:12px;color:#333;">绑扎</div><div class="t" style="left:777px;top:80px;font-size:12px;color:#333;">绑扎</div><div class="t" style="left:848px;top:80px;font-size:12px;color:#333;">绑扎</div><div class="t" style="left:919px;top:80px;font-size:12px;color:#333;">10000</div><div class="t" style="left:990px;top:80px;font-size:12px;color:#333;">10000</div><div class="a" style="left:-1px;top:96px;width:1060px;height:1px;background:#d6d6d6"></div><div class="a" style="left:-1px;top:97px;width:21px;height:21px;background:#efefef"></div><div class="t" style="left:-1px;top:101px;width:21px;text-align:center;font-size:12px;color:#333;">4</div><div class="a" style="left:29px;top:107px;width:17px;height:1px;background:#d6d6d6"></div><div class="t" style="left:52px;top:101px;font-size:12px;color:#333;">16~22</div><div class="t" style="left:280px;top:101px;font-size:12px;color:#333;">直螺纹连接</div><div class="t" style="left:351px;top:101px;font-size:12px;color:#333;">直螺纹连接</div><div class="t" style="left:422px;top:101px;font-size:12px;color:#333;">直螺纹连接</div><div class="t" style="left:493px;top:101px;font-size:12px;color:#333;">电渣压力焊</div><div class="t" style="left:564px;top:101px;font-size:12px;color:#333;">直螺纹连接</div><div class="t" style="left:635px;top:101px;font-size:12px;color:#333;">直螺纹连接</div><div class="t" style="left:706px;top:101px;font-size:12px;color:#333;">电渣压力焊</div><div class="t" style="left:777px;top:101px;font-size:12px;color:#333;">电渣压力焊</div><div class="t" style="left:848px;top:101px;font-size:12px;color:#333;">直螺纹连接</div><div class="t" style="left:919px;top:101px;font-size:12px;color:#333;">10000</div><div class="t" style="left:990px;top:101px;font-size:12px;color:#333;">10000</div><div class="a" style="left:-1px;top:117px;width:1060px;height:1px;background:#d6d6d6"></div><div class="a" style="left:-1px;top:118px;width:21px;height:21px;background:#efefef"></div><div class="t" style="left:-1px;top:122px;width:21px;text-align:center;font-size:12px;color:#333;">5</div><div class="a" style="left:29px;top:128px;width:17px;height:1px;background:#d6d6d6"></div><div class="t" style="left:52px;top:122px;font-size:12px;color:#333;">25~32</div><div class="t" style="left:280px;top:122px;font-size:12px;color:#333;">套管挤压</div><div class="t" style="left:351px;top:122px;font-size:12px;color:#333;">套管挤压</div><div class="t" style="left:422px;top:122px;font-size:12px;color:#333;">套管挤压</div><div class="t" style="left:493px;top:122px;font-size:12px;color:#333;">套管挤压</div><div class="t" style="left:564px;top:122px;font-size:12px;color:#333;">套管挤压</div><div class="t" style="left:635px;top:122px;font-size:12px;color:#333;">套管挤压</div><div class="t" style="left:706px;top:122px;font-size:12px;color:#333;">套管挤压</div><div class="t" style="left:777px;top:122px;font-size:12px;color:#333;">套管挤压</div><div class="t" style="left:848px;top:122px;font-size:12px;color:#333;">套管挤压</div><div class="t" style="left:919px;top:122px;font-size:12px;color:#333;">10000</div><div class="t" style="left:990px;top:122px;font-size:12px;color:#333;">10000</div><div class="a" style="left:-1px;top:138px;width:1060px;height:1px;background:#d6d6d6"></div><div class="a" style="left:-1px;top:139px;width:21px;height:21px;background:#efefef"></div><div class="t" style="left:-1px;top:143px;width:21px;text-align:center;font-size:12px;color:#333;">6</div><div class="a" style="left:20px;top:139px;width:1039px;height:21px;background:#fefbe6"></div><div class="a" style="left:23px;top:142px;width:13px;height:13px;border:1px solid #8a8a8a;border-radius:2px;background:#fff"></div><div class="a" style="left:26px;top:148px;width:7px;height:1px;background:#444"></div><div class="t" style="left:42px;top:143px;font-size:12px;color:#333;">HRB335,HRB335E,HRBF335,HRBF335E</div><div class="a" style="left:-1px;top:159px;width:1060px;height:1px;background:#d6d6d6"></div><div class="a" style="left:-1px;top:160px;width:21px;height:21px;background:#efefef"></div><div class="t" style="left:-1px;top:164px;width:21px;text-align:center;font-size:12px;color:#333;">7</div><div class="a" style="left:29px;top:170px;width:17px;height:1px;background:#d6d6d6"></div><div class="t" style="left:52px;top:164px;font-size:12px;color:#333;">3~10</div><div class="t" style="left:280px;top:164px;font-size:12px;color:#333;">绑扎</div><div class="t" style="left:351px;top:164px;font-size:12px;color:#333;">绑扎</div><div class="t" style="left:422px;top:164px;font-size:12px;color:#333;">绑扎</div><div class="t" style="left:493px;top:164px;font-size:12px;color:#333;">绑扎</div><div class="t" style="left:564px;top:164px;font-size:12px;color:#333;">绑扎</div><div class="t" style="left:635px;top:164px;font-size:12px;color:#333;">绑扎</div><div class="t" style="left:706px;top:164px;font-size:12px;color:#333;">绑扎</div><div class="t" style="left:777px;top:164px;font-size:12px;color:#333;">绑扎</div><div class="t" style="left:848px;top:164px;font-size:12px;color:#333;">绑扎</div><div class="t" style="left:919px;top:164px;font-size:12px;color:#333;">8000</div><div class="t" style="left:990px;top:164px;font-size:12px;color:#333;">8000</div><div class="a" style="left:-1px;top:180px;width:1060px;height:1px;background:#d6d6d6"></div><div class="a" style="left:-1px;top:181px;width:21px;height:21px;background:#efefef"></div><div class="t" style="left:-1px;top:185px;width:21px;text-align:center;font-size:12px;color:#333;">8</div><div class="a" style="left:29px;top:191px;width:17px;height:1px;background:#d6d6d6"></div><div class="t" style="left:52px;top:185px;font-size:12px;color:#333;">12~14</div><div class="t" style="left:280px;top:185px;font-size:12px;color:#333;">绑扎</div><div class="t" style="left:351px;top:185px;font-size:12px;color:#333;">绑扎</div><div class="t" style="left:422px;top:185px;font-size:12px;color:#333;">绑扎</div><div class="t" style="left:493px;top:185px;font-size:12px;color:#333;">绑扎</div><div class="t" style="left:564px;top:185px;font-size:12px;color:#333;">绑扎</div><div class="t" style="left:635px;top:185px;font-size:12px;color:#333;">绑扎</div><div class="t" style="left:706px;top:185px;font-size:12px;color:#333;">绑扎</div><div class="t" style="left:777px;top:185px;font-size:12px;color:#333;">绑扎</div><div class="t" style="left:848px;top:185px;font-size:12px;color:#333;">绑扎</div><div class="t" style="left:919px;top:185px;font-size:12px;color:#333;">10000</div><div class="t" style="left:990px;top:185px;font-size:12px;color:#333;">10000</div><div class="a" style="left:-1px;top:201px;width:1060px;height:1px;background:#d6d6d6"></div><div class="a" style="left:-1px;top:202px;width:21px;height:21px;background:#efefef"></div><div class="t" style="left:-1px;top:206px;width:21px;text-align:center;font-size:12px;color:#333;">9</div><div class="a" style="left:29px;top:212px;width:17px;height:1px;background:#d6d6d6"></div><div class="t" style="left:52px;top:206px;font-size:12px;color:#333;">16~22</div><div class="t" style="left:280px;top:206px;font-size:12px;color:#333;">直螺纹连接</div><div class="t" style="left:351px;top:206px;font-size:12px;color:#333;">直螺纹连接</div><div class="t" style="left:422px;top:206px;font-size:12px;color:#333;">直螺纹连接</div><div class="t" style="left:493px;top:206px;font-size:12px;color:#333;">电渣压力焊</div><div class="t" style="left:564px;top:206px;font-size:12px;color:#333;">直螺纹连接</div><div class="t" style="left:635px;top:206px;font-size:12px;color:#333;">直螺纹连接</div><div class="t" style="left:706px;top:206px;font-size:12px;color:#333;">电渣压力焊</div><div class="t" style="left:777px;top:206px;font-size:12px;color:#333;">电渣压力焊</div><div class="t" style="left:848px;top:206px;font-size:12px;color:#333;">直螺纹连接</div><div class="t" style="left:919px;top:206px;font-size:12px;color:#333;">10000</div><div class="t" style="left:990px;top:206px;font-size:12px;color:#333;">10000</div><div class="a" style="left:-1px;top:222px;width:1060px;height:1px;background:#d6d6d6"></div><div class="a" style="left:-1px;top:223px;width:21px;height:21px;background:#efefef"></div><div class="t" style="left:-1px;top:227px;width:21px;text-align:center;font-size:12px;color:#333;">10</div><div class="a" style="left:29px;top:233px;width:17px;height:1px;background:#d6d6d6"></div><div class="t" style="left:52px;top:227px;font-size:12px;color:#333;">25~50</div><div class="t" style="left:280px;top:227px;font-size:12px;color:#333;">套管挤压</div><div class="t" style="left:351px;top:227px;font-size:12px;color:#333;">套管挤压</div><div class="t" style="left:422px;top:227px;font-size:12px;color:#333;">套管挤压</div><div class="t" style="left:493px;top:227px;font-size:12px;color:#333;">套管挤压</div><div class="t" style="left:564px;top:227px;font-size:12px;color:#333;">套管挤压</div><div class="t" style="left:635px;top:227px;font-size:12px;color:#333;">套管挤压</div><div class="t" style="left:706px;top:227px;font-size:12px;color:#333;">套管挤压</div><div class="t" style="left:777px;top:227px;font-size:12px;color:#333;">套管挤压</div><div class="t" style="left:848px;top:227px;font-size:12px;color:#333;">套管挤压</div><div class="t" style="left:919px;top:227px;font-size:12px;color:#333;">10000</div><div class="t" style="left:990px;top:227px;font-size:12px;color:#333;">10000</div><div class="a" style="left:-1px;top:243px;width:1060px;height:1px;background:#d6d6d6"></div><div class="a" style="left:-1px;top:244px;width:21px;height:21px;background:#efefef"></div><div class="t" style="left:-1px;top:248px;width:21px;text-align:center;font-size:12px;color:#333;">11</div><div class="a" style="left:20px;top:244px;width:1039px;height:21px;background:#fefbe6"></div><div class="a" style="left:23px;top:247px;width:13px;height:13px;border:1px solid #8a8a8a;border-radius:2px;background:#fff"></div><div class="a" style="left:26px;top:253px;width:7px;height:1px;background:#444"></div><div class="t" style="left:42px;top:248px;font-size:12px;color:#333;">HRB400,HRB400E,HRBF400,HRBF400E...</div><div class="a" style="left:-1px;top:264px;width:1060px;height:1px;background:#d6d6d6"></div><div class="a" style="left:-1px;top:265px;width:21px;height:21px;background:#efefef"></div><div class="t" style="left:-1px;top:269px;width:21px;text-align:center;font-size:12px;color:#333;">12</div><div class="a" style="left:29px;top:275px;width:17px;height:1px;background:#d6d6d6"></div><div class="t" style="left:52px;top:269px;font-size:12px;color:#333;">3~10</div><div class="t" style="left:280px;top:269px;font-size:12px;color:#333;">绑扎</div><div class="t" style="left:351px;top:269px;font-size:12px;color:#333;">绑扎</div><div class="t" style="left:422px;top:269px;font-size:12px;color:#333;">绑扎</div><div class="t" style="left:493px;top:269px;font-size:12px;color:#333;">绑扎</div><div class="t" style="left:564px;top:269px;font-size:12px;color:#333;">绑扎</div><div class="t" style="left:635px;top:269px;font-size:12px;color:#333;">绑扎</div><div class="t" style="left:706px;top:269px;font-size:12px;color:#333;">绑扎</div><div class="t" style="left:777px;top:269px;font-size:12px;color:#333;">绑扎</div><div class="t" style="left:848px;top:269px;font-size:12px;color:#333;">绑扎</div><div class="t" style="left:919px;top:269px;font-size:12px;color:#333;">8000</div><div class="t" style="left:990px;top:269px;font-size:12px;color:#333;">8000</div><div class="a" style="left:-1px;top:285px;width:1060px;height:1px;background:#d6d6d6"></div><div class="a" style="left:-1px;top:286px;width:21px;height:21px;background:#efefef"></div><div class="t" style="left:-1px;top:290px;width:21px;text-align:center;font-size:12px;color:#333;">13</div><div class="a" style="left:29px;top:296px;width:17px;height:1px;background:#d6d6d6"></div><div class="t" style="left:52px;top:290px;font-size:12px;color:#333;">12~14</div><div class="t" style="left:280px;top:290px;font-size:12px;color:#333;">绑扎</div><div class="t" style="left:351px;top:290px;font-size:12px;color:#333;">绑扎</div><div class="t" style="left:422px;top:290px;font-size:12px;color:#333;">绑扎</div><div class="t" style="left:493px;top:290px;font-size:12px;color:#333;">绑扎</div><div class="t" style="left:564px;top:290px;font-size:12px;color:#333;">绑扎</div><div class="t" style="left:635px;top:290px;font-size:12px;color:#333;">绑扎</div><div class="t" style="left:706px;top:290px;font-size:12px;color:#333;">绑扎</div><div class="t" style="left:777px;top:290px;font-size:12px;color:#333;">绑扎</div><div class="t" style="left:848px;top:290px;font-size:12px;color:#333;">绑扎</div><div class="t" style="left:919px;top:290px;font-size:12px;color:#333;">10000</div><div class="t" style="left:990px;top:290px;font-size:12px;color:#333;">10000</div><div class="a" style="left:-1px;top:306px;width:1060px;height:1px;background:#d6d6d6"></div><div class="a" style="left:-1px;top:307px;width:21px;height:21px;background:#efefef"></div><div class="a" style="left:-1px;top:307px;width:21px;height:21px;background:#4a9ef5"></div><div class="t" style="left:-1px;top:311px;width:21px;text-align:center;font-size:12px;color:#333;color:#fff;font-weight:bold">14</div><div class="a" style="left:29px;top:317px;width:17px;height:1px;background:#d6d6d6"></div><div class="t" style="left:52px;top:311px;font-size:12px;color:#333;">16~22</div><div class="t" style="left:280px;top:311px;font-size:12px;color:#333;">直螺纹连接</div><div class="t" style="left:351px;top:311px;font-size:12px;color:#333;">直螺纹连接</div><div class="t" style="left:422px;top:311px;font-size:12px;color:#333;">直螺纹连接</div><div class="t" style="left:493px;top:311px;font-size:12px;color:#333;">电渣压力焊</div><div class="t" style="left:564px;top:311px;font-size:12px;color:#333;">直螺纹连接</div><div class="t" style="left:635px;top:311px;font-size:12px;color:#333;">直螺纹连接</div><div class="t" style="left:706px;top:311px;font-size:12px;color:#333;">电渣压力焊</div><div class="t" style="left:777px;top:311px;font-size:12px;color:#333;">电渣压力焊</div><div class="t" style="left:848px;top:311px;font-size:12px;color:#333;">直螺纹连接</div><div class="t" style="left:919px;top:311px;font-size:12px;color:#333;">10000</div><div class="t" style="left:990px;top:311px;font-size:12px;color:#333;">10000</div><div class="a" style="left:-1px;top:327px;width:1060px;height:1px;background:#d6d6d6"></div><div class="a" style="left:-1px;top:328px;width:21px;height:21px;background:#efefef"></div><div class="t" style="left:-1px;top:332px;width:21px;text-align:center;font-size:12px;color:#333;">15</div><div class="a" style="left:29px;top:338px;width:17px;height:1px;background:#d6d6d6"></div><div class="t" style="left:52px;top:332px;font-size:12px;color:#333;">25~50</div><div class="t" style="left:280px;top:332px;font-size:12px;color:#333;">套管挤压</div><div class="t" style="left:351px;top:332px;font-size:12px;color:#333;">套管挤压</div><div class="t" style="left:422px;top:332px;font-size:12px;color:#333;">套管挤压</div><div class="t" style="left:493px;top:332px;font-size:12px;color:#333;">套管挤压</div><div class="t" style="left:564px;top:332px;font-size:12px;color:#333;">套管挤压</div><div class="t" style="left:635px;top:332px;font-size:12px;color:#333;">套管挤压</div><div class="t" style="left:706px;top:332px;font-size:12px;color:#333;">套管挤压</div><div class="t" style="left:777px;top:332px;font-size:12px;color:#333;">套管挤压</div><div class="t" style="left:848px;top:332px;font-size:12px;color:#333;">套管挤压</div><div class="t" style="left:919px;top:332px;font-size:12px;color:#333;">10000</div><div class="t" style="left:990px;top:332px;font-size:12px;color:#333;">10000</div><div class="a" style="left:-1px;top:348px;width:1060px;height:1px;background:#d6d6d6"></div><div class="a" style="left:-1px;top:349px;width:21px;height:21px;background:#efefef"></div><div class="t" style="left:-1px;top:353px;width:21px;text-align:center;font-size:12px;color:#333;">16</div><div class="a" style="left:20px;top:349px;width:1039px;height:21px;background:#fefbe6"></div><div class="a" style="left:23px;top:352px;width:13px;height:13px;border:1px solid #8a8a8a;border-radius:2px;background:#fff"></div><div class="a" style="left:26px;top:358px;width:7px;height:1px;background:#444"></div><div class="t" style="left:42px;top:353px;font-size:12px;color:#333;">冷轧带肋钢筋</div><div class="a" style="left:-1px;top:369px;width:1060px;height:1px;background:#d6d6d6"></div><div class="a" style="left:-1px;top:370px;width:21px;height:21px;background:#efefef"></div><div class="t" style="left:-1px;top:374px;width:21px;text-align:center;font-size:12px;color:#333;">17</div><div class="a" style="left:29px;top:380px;width:17px;height:1px;background:#d6d6d6"></div><div class="t" style="left:52px;top:374px;font-size:12px;color:#333;">4~12</div><div class="t" style="left:280px;top:374px;font-size:12px;color:#333;">绑扎</div><div class="t" style="left:351px;top:374px;font-size:12px;color:#333;">绑扎</div><div class="t" style="left:422px;top:374px;font-size:12px;color:#333;">绑扎</div><div class="t" style="left:493px;top:374px;font-size:12px;color:#333;">绑扎</div><div class="t" style="left:564px;top:374px;font-size:12px;color:#333;">绑扎</div><div class="t" style="left:635px;top:374px;font-size:12px;color:#333;">绑扎</div><div class="t" style="left:706px;top:374px;font-size:12px;color:#333;">绑扎</div><div class="t" style="left:777px;top:374px;font-size:12px;color:#333;">绑扎</div><div class="t" style="left:848px;top:374px;font-size:12px;color:#333;">绑扎</div><div class="t" style="left:919px;top:374px;font-size:12px;color:#333;">8000</div><div class="t" style="left:990px;top:374px;font-size:12px;color:#333;">8000</div><div class="a" style="left:-1px;top:390px;width:1060px;height:1px;background:#d6d6d6"></div><div class="a" style="left:-1px;top:391px;width:21px;height:21px;background:#efefef"></div><div class="t" style="left:-1px;top:395px;width:21px;text-align:center;font-size:12px;color:#333;">18</div><div class="a" style="left:20px;top:391px;width:1039px;height:21px;background:#fefbe6"></div><div class="a" style="left:23px;top:394px;width:13px;height:13px;border:1px solid #8a8a8a;border-radius:2px;background:#fff"></div><div class="a" style="left:26px;top:400px;width:7px;height:1px;background:#444"></div><div class="t" style="left:42px;top:395px;font-size:12px;color:#333;">冷轧扭钢筋</div><div class="a" style="left:-1px;top:411px;width:1060px;height:1px;background:#d6d6d6"></div><div class="a" style="left:-1px;top:412px;width:21px;height:21px;background:#efefef"></div><div class="t" style="left:-1px;top:416px;width:21px;text-align:center;font-size:12px;color:#333;">19</div><div class="a" style="left:29px;top:422px;width:17px;height:1px;background:#d6d6d6"></div><div class="t" style="left:52px;top:416px;font-size:12px;color:#333;">6.5~14</div><div class="t" style="left:280px;top:416px;font-size:12px;color:#333;">绑扎</div><div class="t" style="left:351px;top:416px;font-size:12px;color:#333;">绑扎</div><div class="t" style="left:422px;top:416px;font-size:12px;color:#333;">绑扎</div><div class="t" style="left:493px;top:416px;font-size:12px;color:#333;">绑扎</div><div class="t" style="left:564px;top:416px;font-size:12px;color:#333;">绑扎</div><div class="t" style="left:635px;top:416px;font-size:12px;color:#333;">绑扎</div><div class="t" style="left:706px;top:416px;font-size:12px;color:#333;">绑扎</div><div class="t" style="left:777px;top:416px;font-size:12px;color:#333;">绑扎</div><div class="t" style="left:848px;top:416px;font-size:12px;color:#333;">绑扎</div><div class="t" style="left:919px;top:416px;font-size:12px;color:#333;">8000</div><div class="t" style="left:990px;top:416px;font-size:12px;color:#333;">8000</div><div class="a" style="left:-1px;top:432px;width:1060px;height:1px;background:#d6d6d6"></div><div class="a" style="left:29px;top:50px;width:1px;height:78px;background:#d6d6d6"></div><div class="a" style="left:29px;top:155px;width:1px;height:78px;background:#d6d6d6"></div><div class="a" style="left:29px;top:260px;width:1px;height:78px;background:#d6d6d6"></div><div class="a" style="left:29px;top:365px;width:1px;height:15px;background:#d6d6d6"></div><div class="a" style="left:29px;top:407px;width:1px;height:15px;background:#d6d6d6"></div><div class="a" style="left:20px;top:34px;width:1px;height:399px;background:#c8c8c8"></div><div class="a" style="left:276px;top:34px;width:1px;height:399px;background:#d6d6d6"></div><div class="a" style="left:347px;top:34px;width:1px;height:399px;background:#d6d6d6"></div><div class="a" style="left:418px;top:34px;width:1px;height:399px;background:#d6d6d6"></div><div class="a" style="left:489px;top:34px;width:1px;height:399px;background:#d6d6d6"></div><div class="a" style="left:560px;top:34px;width:1px;height:399px;background:#d6d6d6"></div><div class="a" style="left:631px;top:34px;width:1px;height:399px;background:#d6d6d6"></div><div class="a" style="left:702px;top:34px;width:1px;height:399px;background:#d6d6d6"></div><div class="a" style="left:773px;top:34px;width:1px;height:399px;background:#d6d6d6"></div><div class="a" style="left:844px;top:34px;width:1px;height:399px;background:#d6d6d6"></div><div class="a" style="left:915px;top:34px;width:1px;height:399px;background:#d6d6d6"></div><div class="a" style="left:986px;top:34px;width:1px;height:399px;background:#d6d6d6"></div><div class="a" style="left:1057px;top:34px;width:1px;height:399px;background:#d6d6d6"></div>
</div>
<div class="a" style="left:1133px;top:537px;width:72px;height:20px;border:2px solid #5a9fe0;background:#fff"></div>
<div class="a" style="left:1137px;top:539px;width:48px;height:17px;overflow:hidden"><div class="t" style="left:-2px;top:3px;font-size:12px;color:#333">渣压力焊</div></div>
<div class="a" style="left:1188px;top:546px;width:0;height:0;border-left:3px solid transparent;border-right:3px solid transparent;border-top:3px solid #555"></div>
<div class="a" style="left:1134px;top:556px;width:105px;height:252px;border:1px solid #5aa5e0;background:#fff;box-shadow:2px 3px 6px rgba(0,0,0,.25)"></div>
<div class="a" style="left:1135px;top:682px;width:103px;height:25px;background:#c5daf2"></div>
<div class="t" style="left:1139px;top:563px;font-size:12px;color:#333">绑扎</div>
<div class="t" style="left:1139px;top:588px;font-size:12px;color:#333">单面焊</div>
<div class="t" style="left:1139px;top:613px;font-size:12px;color:#333">双面焊</div>
<div class="t" style="left:1139px;top:638px;font-size:12px;color:#333">电渣压力焊</div>
<div class="t" style="left:1139px;top:663px;font-size:12px;color:#333">锥螺纹连接</div>
<div class="t" style="left:1139px;top:688px;font-size:12px;color:#333">直螺纹连接</div>
<div class="t" style="left:1139px;top:713px;font-size:12px;color:#333">对焊</div>
<div class="t" style="left:1139px;top:738px;font-size:12px;color:#333">套管挤压</div>
<div class="t" style="left:1139px;top:763px;font-size:12px;color:#333">锥螺纹（可调型）</div>
<div class="t" style="left:1139px;top:788px;font-size:12px;color:#333">气压焊</div>
<div class="a" style="left:430px;top:815px;width:14px;height:14px;border:1px solid #888;border-radius:2px;background:#fff"></div>
<div class="t" style="left:447px;top:816px;font-size:12px;color:#333">单（双）面焊统计搭接长度</div>
<div class="a" style="left:419px;top:847px;width:79px;height:26px;border:1px solid #cfcfcf;border-radius:3px;background:#fff"></div>
<div class="t" style="left:419px;width:79px;text-align:center;top:854px;font-size:12px;color:#333">导入规则</div>
<div class="a" style="left:505px;top:847px;width:79px;height:26px;border:1px solid #cfcfcf;border-radius:3px;background:#fff"></div>
<div class="t" style="left:505px;width:79px;text-align:center;top:854px;font-size:12px;color:#333">导出规则</div>
<div class="a" style="left:591px;top:847px;width:79px;height:26px;border:1px solid #cfcfcf;border-radius:3px;background:#fff"></div>
<div class="t" style="left:591px;width:79px;text-align:center;top:854px;font-size:12px;color:#333">恢复默认值</div>
<div class="a" style="left:1507px;top:873px;width:2px;height:2px;background:#5a6270"></div>
<div class="a" style="left:1504px;top:876px;width:2px;height:2px;background:#5a6270"></div>
<div class="a" style="left:1507px;top:876px;width:2px;height:2px;background:#5a6270"></div>
<div class="a" style="left:1501px;top:879px;width:2px;height:2px;background:#5a6270"></div>
<div class="a" style="left:1504px;top:879px;width:2px;height:2px;background:#5a6270"></div>
<div class="a" style="left:1507px;top:879px;width:2px;height:2px;background:#5a6270"></div>
</body></html>
